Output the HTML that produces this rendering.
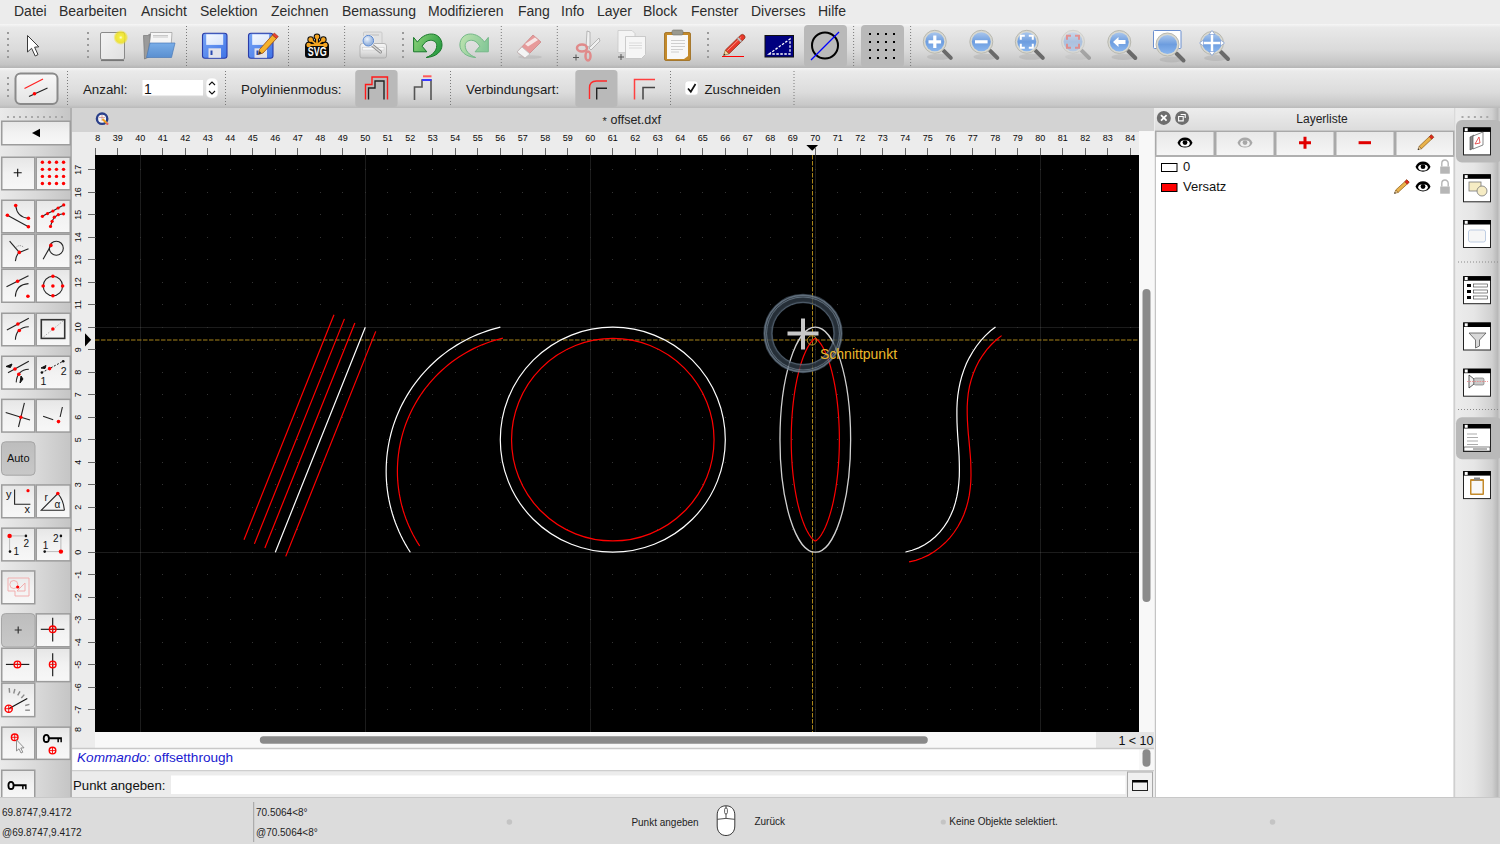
<!DOCTYPE html>
<html><head><meta charset="utf-8">
<style>
*{margin:0;padding:0;box-sizing:border-box}
html,body{width:1500px;height:844px;overflow:hidden;background:#ececec;font-family:"Liberation Sans",sans-serif;color:#1a1a1a}
.a{position:absolute}
#menubar{left:0;top:0;width:1500px;height:24px;background:#ececec}
#menubar span{position:absolute;top:3px;font-size:14px;color:#2c2c2c;white-space:nowrap}
#tb1{left:0;top:24px;width:1500px;height:44px;background:linear-gradient(#f6f6f6 0,#e9e9e9 8%,#dadada 60%,#c4c4c4 92%,#b4b4b4 100%)}
#tb2{left:0;top:68px;width:1500px;height:40px;background:linear-gradient(#f6f6f6 0,#eaeaea 8%,#dcdcdc 60%,#c8c8c8 92%,#bababa 100%)}
.lbl{position:absolute;font-size:14px;color:#1c1c1c;white-space:nowrap}
#leftpanel{left:0;top:108px;width:72px;height:692px;background:linear-gradient(90deg,#eaeaea 0,#dadada 35px,#c6c6c6 69px);border-right:2px solid #b0b0b0}
#mdi{left:72px;top:108px;width:1082px;height:692px;background:#ececec}
#mdititle{left:72px;top:108px;width:1082px;height:24px;background:#d3d3d3}
#rulert{left:95px;top:132px;width:1059px;height:23px;background:#ececec}
#rulerl{left:72px;top:132px;width:23px;height:600px;background:#ececec}
#canvas{left:95px;top:155px;width:1044px;height:577px;background:#000}
#hscroll{left:95px;top:732px;width:1059px;height:16px;background:#f7f7f7}
#vscroll{left:1139px;top:131px;width:15px;height:601px;background:#f7f7f7}
#cmd{left:72px;top:748px;width:1082px;height:52px;background:#ececec}
#layer{left:1155px;top:108px;width:299px;height:692px;background:#ececec}
#rdock{left:1454px;top:108px;width:46px;height:692px;background:linear-gradient(90deg,#d4d4d4 0,#ececec 2px,#e6e6e6 20px,#d0d0d0 38px,#b9b9b9 43.5px,#d0d0d0 46px)}
#status{left:0;top:800px;width:1500px;height:44px;background:#dcdcdc;border-top:1px solid #cfcfcf}
.st{position:absolute;font-size:10px;color:#1f1f1f;white-space:nowrap}
.tbtn{position:absolute;background:linear-gradient(#fbfbfb,#e9e9e9);border:1px solid #a9a9a9}
</style></head><body>
<div id="menubar" class="a">
<span style="left:14px">Datei</span><span style="left:59px">Bearbeiten</span><span style="left:141px">Ansicht</span><span style="left:200px">Selektion</span><span style="left:271px">Zeichnen</span><span style="left:342px">Bemassung</span><span style="left:428px">Modifizieren</span><span style="left:518px">Fang</span><span style="left:561px">Info</span><span style="left:597px">Layer</span><span style="left:643px">Block</span><span style="left:691px">Fenster</span><span style="left:751px">Diverses</span><span style="left:818px">Hilfe</span>
</div>
<div id="tb1" class="a"></div>
<div id="tb2" class="a"></div>
<div id="leftpanel" class="a"></div>
<div id="mdi" class="a"></div>
<div id="mdititle" class="a"></div>
<div id="rulert" class="a"></div>
<div id="rulerl" class="a"></div>
<div id="canvas" class="a"></div>
<div id="hscroll" class="a"></div>
<div id="vscroll" class="a"></div>
<div id="cmd" class="a"></div>
<div id="layer" class="a"></div>
<div id="rdock" class="a"></div>
<div id="status" class="a"></div>
<svg class="a" style="left:95px;top:155px" width="1044" height="577" viewBox="95 155 1044 577">
<rect x="95" y="155" width="1044" height="577" fill="#000"/>
<line x1="140.5" y1="155" x2="140.5" y2="732" stroke="#1c1c1c" stroke-width="1"/>
<line x1="365.5" y1="155" x2="365.5" y2="732" stroke="#1c1c1c" stroke-width="1"/>
<line x1="590.5" y1="155" x2="590.5" y2="732" stroke="#1c1c1c" stroke-width="1"/>
<line x1="815.5" y1="155" x2="815.5" y2="732" stroke="#1c1c1c" stroke-width="1"/>
<line x1="1040.5" y1="155" x2="1040.5" y2="732" stroke="#1c1c1c" stroke-width="1"/>
<line x1="95" y1="327.5" x2="1139" y2="327.5" stroke="#1c1c1c" stroke-width="1"/>
<line x1="95" y1="552.5" x2="1139" y2="552.5" stroke="#1c1c1c" stroke-width="1"/>
<path d="M95 709h1v1h-1zM95 687h1v1h-1zM95 664h1v1h-1zM95 642h1v1h-1zM95 619h1v1h-1zM95 597h1v1h-1zM95 574h1v1h-1zM95 552h1v1h-1zM95 529h1v1h-1zM95 507h1v1h-1zM95 484h1v1h-1zM95 462h1v1h-1zM95 439h1v1h-1zM95 417h1v1h-1zM95 394h1v1h-1zM95 372h1v1h-1zM95 349h1v1h-1zM95 327h1v1h-1zM95 304h1v1h-1zM95 282h1v1h-1zM95 259h1v1h-1zM95 237h1v1h-1zM95 214h1v1h-1zM95 192h1v1h-1zM95 169h1v1h-1zM117 709h1v1h-1zM117 687h1v1h-1zM117 664h1v1h-1zM117 642h1v1h-1zM117 619h1v1h-1zM117 597h1v1h-1zM117 574h1v1h-1zM117 552h1v1h-1zM117 529h1v1h-1zM117 507h1v1h-1zM117 484h1v1h-1zM117 462h1v1h-1zM117 439h1v1h-1zM117 417h1v1h-1zM117 394h1v1h-1zM117 372h1v1h-1zM117 349h1v1h-1zM117 327h1v1h-1zM117 304h1v1h-1zM117 282h1v1h-1zM117 259h1v1h-1zM117 237h1v1h-1zM117 214h1v1h-1zM117 192h1v1h-1zM117 169h1v1h-1zM140 709h1v1h-1zM140 687h1v1h-1zM140 664h1v1h-1zM140 642h1v1h-1zM140 619h1v1h-1zM140 597h1v1h-1zM140 574h1v1h-1zM140 552h1v1h-1zM140 529h1v1h-1zM140 507h1v1h-1zM140 484h1v1h-1zM140 462h1v1h-1zM140 439h1v1h-1zM140 417h1v1h-1zM140 394h1v1h-1zM140 372h1v1h-1zM140 349h1v1h-1zM140 327h1v1h-1zM140 304h1v1h-1zM140 282h1v1h-1zM140 259h1v1h-1zM140 237h1v1h-1zM140 214h1v1h-1zM140 192h1v1h-1zM140 169h1v1h-1zM162 709h1v1h-1zM162 687h1v1h-1zM162 664h1v1h-1zM162 642h1v1h-1zM162 619h1v1h-1zM162 597h1v1h-1zM162 574h1v1h-1zM162 552h1v1h-1zM162 529h1v1h-1zM162 507h1v1h-1zM162 484h1v1h-1zM162 462h1v1h-1zM162 439h1v1h-1zM162 417h1v1h-1zM162 394h1v1h-1zM162 372h1v1h-1zM162 349h1v1h-1zM162 327h1v1h-1zM162 304h1v1h-1zM162 282h1v1h-1zM162 259h1v1h-1zM162 237h1v1h-1zM162 214h1v1h-1zM162 192h1v1h-1zM162 169h1v1h-1zM185 709h1v1h-1zM185 687h1v1h-1zM185 664h1v1h-1zM185 642h1v1h-1zM185 619h1v1h-1zM185 597h1v1h-1zM185 574h1v1h-1zM185 552h1v1h-1zM185 529h1v1h-1zM185 507h1v1h-1zM185 484h1v1h-1zM185 462h1v1h-1zM185 439h1v1h-1zM185 417h1v1h-1zM185 394h1v1h-1zM185 372h1v1h-1zM185 349h1v1h-1zM185 327h1v1h-1zM185 304h1v1h-1zM185 282h1v1h-1zM185 259h1v1h-1zM185 237h1v1h-1zM185 214h1v1h-1zM185 192h1v1h-1zM185 169h1v1h-1zM207 709h1v1h-1zM207 687h1v1h-1zM207 664h1v1h-1zM207 642h1v1h-1zM207 619h1v1h-1zM207 597h1v1h-1zM207 574h1v1h-1zM207 552h1v1h-1zM207 529h1v1h-1zM207 507h1v1h-1zM207 484h1v1h-1zM207 462h1v1h-1zM207 439h1v1h-1zM207 417h1v1h-1zM207 394h1v1h-1zM207 372h1v1h-1zM207 349h1v1h-1zM207 327h1v1h-1zM207 304h1v1h-1zM207 282h1v1h-1zM207 259h1v1h-1zM207 237h1v1h-1zM207 214h1v1h-1zM207 192h1v1h-1zM207 169h1v1h-1zM230 709h1v1h-1zM230 687h1v1h-1zM230 664h1v1h-1zM230 642h1v1h-1zM230 619h1v1h-1zM230 597h1v1h-1zM230 574h1v1h-1zM230 552h1v1h-1zM230 529h1v1h-1zM230 507h1v1h-1zM230 484h1v1h-1zM230 462h1v1h-1zM230 439h1v1h-1zM230 417h1v1h-1zM230 394h1v1h-1zM230 372h1v1h-1zM230 349h1v1h-1zM230 327h1v1h-1zM230 304h1v1h-1zM230 282h1v1h-1zM230 259h1v1h-1zM230 237h1v1h-1zM230 214h1v1h-1zM230 192h1v1h-1zM230 169h1v1h-1zM252 709h1v1h-1zM252 687h1v1h-1zM252 664h1v1h-1zM252 642h1v1h-1zM252 619h1v1h-1zM252 597h1v1h-1zM252 574h1v1h-1zM252 552h1v1h-1zM252 529h1v1h-1zM252 507h1v1h-1zM252 484h1v1h-1zM252 462h1v1h-1zM252 439h1v1h-1zM252 417h1v1h-1zM252 394h1v1h-1zM252 372h1v1h-1zM252 349h1v1h-1zM252 327h1v1h-1zM252 304h1v1h-1zM252 282h1v1h-1zM252 259h1v1h-1zM252 237h1v1h-1zM252 214h1v1h-1zM252 192h1v1h-1zM252 169h1v1h-1zM275 709h1v1h-1zM275 687h1v1h-1zM275 664h1v1h-1zM275 642h1v1h-1zM275 619h1v1h-1zM275 597h1v1h-1zM275 574h1v1h-1zM275 552h1v1h-1zM275 529h1v1h-1zM275 507h1v1h-1zM275 484h1v1h-1zM275 462h1v1h-1zM275 439h1v1h-1zM275 417h1v1h-1zM275 394h1v1h-1zM275 372h1v1h-1zM275 349h1v1h-1zM275 327h1v1h-1zM275 304h1v1h-1zM275 282h1v1h-1zM275 259h1v1h-1zM275 237h1v1h-1zM275 214h1v1h-1zM275 192h1v1h-1zM275 169h1v1h-1zM297 709h1v1h-1zM297 687h1v1h-1zM297 664h1v1h-1zM297 642h1v1h-1zM297 619h1v1h-1zM297 597h1v1h-1zM297 574h1v1h-1zM297 552h1v1h-1zM297 529h1v1h-1zM297 507h1v1h-1zM297 484h1v1h-1zM297 462h1v1h-1zM297 439h1v1h-1zM297 417h1v1h-1zM297 394h1v1h-1zM297 372h1v1h-1zM297 349h1v1h-1zM297 327h1v1h-1zM297 304h1v1h-1zM297 282h1v1h-1zM297 259h1v1h-1zM297 237h1v1h-1zM297 214h1v1h-1zM297 192h1v1h-1zM297 169h1v1h-1zM320 709h1v1h-1zM320 687h1v1h-1zM320 664h1v1h-1zM320 642h1v1h-1zM320 619h1v1h-1zM320 597h1v1h-1zM320 574h1v1h-1zM320 552h1v1h-1zM320 529h1v1h-1zM320 507h1v1h-1zM320 484h1v1h-1zM320 462h1v1h-1zM320 439h1v1h-1zM320 417h1v1h-1zM320 394h1v1h-1zM320 372h1v1h-1zM320 349h1v1h-1zM320 327h1v1h-1zM320 304h1v1h-1zM320 282h1v1h-1zM320 259h1v1h-1zM320 237h1v1h-1zM320 214h1v1h-1zM320 192h1v1h-1zM320 169h1v1h-1zM342 709h1v1h-1zM342 687h1v1h-1zM342 664h1v1h-1zM342 642h1v1h-1zM342 619h1v1h-1zM342 597h1v1h-1zM342 574h1v1h-1zM342 552h1v1h-1zM342 529h1v1h-1zM342 507h1v1h-1zM342 484h1v1h-1zM342 462h1v1h-1zM342 439h1v1h-1zM342 417h1v1h-1zM342 394h1v1h-1zM342 372h1v1h-1zM342 349h1v1h-1zM342 327h1v1h-1zM342 304h1v1h-1zM342 282h1v1h-1zM342 259h1v1h-1zM342 237h1v1h-1zM342 214h1v1h-1zM342 192h1v1h-1zM342 169h1v1h-1zM365 709h1v1h-1zM365 687h1v1h-1zM365 664h1v1h-1zM365 642h1v1h-1zM365 619h1v1h-1zM365 597h1v1h-1zM365 574h1v1h-1zM365 552h1v1h-1zM365 529h1v1h-1zM365 507h1v1h-1zM365 484h1v1h-1zM365 462h1v1h-1zM365 439h1v1h-1zM365 417h1v1h-1zM365 394h1v1h-1zM365 372h1v1h-1zM365 349h1v1h-1zM365 327h1v1h-1zM365 304h1v1h-1zM365 282h1v1h-1zM365 259h1v1h-1zM365 237h1v1h-1zM365 214h1v1h-1zM365 192h1v1h-1zM365 169h1v1h-1zM387 709h1v1h-1zM387 687h1v1h-1zM387 664h1v1h-1zM387 642h1v1h-1zM387 619h1v1h-1zM387 597h1v1h-1zM387 574h1v1h-1zM387 552h1v1h-1zM387 529h1v1h-1zM387 507h1v1h-1zM387 484h1v1h-1zM387 462h1v1h-1zM387 439h1v1h-1zM387 417h1v1h-1zM387 394h1v1h-1zM387 372h1v1h-1zM387 349h1v1h-1zM387 327h1v1h-1zM387 304h1v1h-1zM387 282h1v1h-1zM387 259h1v1h-1zM387 237h1v1h-1zM387 214h1v1h-1zM387 192h1v1h-1zM387 169h1v1h-1zM410 709h1v1h-1zM410 687h1v1h-1zM410 664h1v1h-1zM410 642h1v1h-1zM410 619h1v1h-1zM410 597h1v1h-1zM410 574h1v1h-1zM410 552h1v1h-1zM410 529h1v1h-1zM410 507h1v1h-1zM410 484h1v1h-1zM410 462h1v1h-1zM410 439h1v1h-1zM410 417h1v1h-1zM410 394h1v1h-1zM410 372h1v1h-1zM410 349h1v1h-1zM410 327h1v1h-1zM410 304h1v1h-1zM410 282h1v1h-1zM410 259h1v1h-1zM410 237h1v1h-1zM410 214h1v1h-1zM410 192h1v1h-1zM410 169h1v1h-1zM432 709h1v1h-1zM432 687h1v1h-1zM432 664h1v1h-1zM432 642h1v1h-1zM432 619h1v1h-1zM432 597h1v1h-1zM432 574h1v1h-1zM432 552h1v1h-1zM432 529h1v1h-1zM432 507h1v1h-1zM432 484h1v1h-1zM432 462h1v1h-1zM432 439h1v1h-1zM432 417h1v1h-1zM432 394h1v1h-1zM432 372h1v1h-1zM432 349h1v1h-1zM432 327h1v1h-1zM432 304h1v1h-1zM432 282h1v1h-1zM432 259h1v1h-1zM432 237h1v1h-1zM432 214h1v1h-1zM432 192h1v1h-1zM432 169h1v1h-1zM455 709h1v1h-1zM455 687h1v1h-1zM455 664h1v1h-1zM455 642h1v1h-1zM455 619h1v1h-1zM455 597h1v1h-1zM455 574h1v1h-1zM455 552h1v1h-1zM455 529h1v1h-1zM455 507h1v1h-1zM455 484h1v1h-1zM455 462h1v1h-1zM455 439h1v1h-1zM455 417h1v1h-1zM455 394h1v1h-1zM455 372h1v1h-1zM455 349h1v1h-1zM455 327h1v1h-1zM455 304h1v1h-1zM455 282h1v1h-1zM455 259h1v1h-1zM455 237h1v1h-1zM455 214h1v1h-1zM455 192h1v1h-1zM455 169h1v1h-1zM477 709h1v1h-1zM477 687h1v1h-1zM477 664h1v1h-1zM477 642h1v1h-1zM477 619h1v1h-1zM477 597h1v1h-1zM477 574h1v1h-1zM477 552h1v1h-1zM477 529h1v1h-1zM477 507h1v1h-1zM477 484h1v1h-1zM477 462h1v1h-1zM477 439h1v1h-1zM477 417h1v1h-1zM477 394h1v1h-1zM477 372h1v1h-1zM477 349h1v1h-1zM477 327h1v1h-1zM477 304h1v1h-1zM477 282h1v1h-1zM477 259h1v1h-1zM477 237h1v1h-1zM477 214h1v1h-1zM477 192h1v1h-1zM477 169h1v1h-1zM500 709h1v1h-1zM500 687h1v1h-1zM500 664h1v1h-1zM500 642h1v1h-1zM500 619h1v1h-1zM500 597h1v1h-1zM500 574h1v1h-1zM500 552h1v1h-1zM500 529h1v1h-1zM500 507h1v1h-1zM500 484h1v1h-1zM500 462h1v1h-1zM500 439h1v1h-1zM500 417h1v1h-1zM500 394h1v1h-1zM500 372h1v1h-1zM500 349h1v1h-1zM500 327h1v1h-1zM500 304h1v1h-1zM500 282h1v1h-1zM500 259h1v1h-1zM500 237h1v1h-1zM500 214h1v1h-1zM500 192h1v1h-1zM500 169h1v1h-1zM522 709h1v1h-1zM522 687h1v1h-1zM522 664h1v1h-1zM522 642h1v1h-1zM522 619h1v1h-1zM522 597h1v1h-1zM522 574h1v1h-1zM522 552h1v1h-1zM522 529h1v1h-1zM522 507h1v1h-1zM522 484h1v1h-1zM522 462h1v1h-1zM522 439h1v1h-1zM522 417h1v1h-1zM522 394h1v1h-1zM522 372h1v1h-1zM522 349h1v1h-1zM522 327h1v1h-1zM522 304h1v1h-1zM522 282h1v1h-1zM522 259h1v1h-1zM522 237h1v1h-1zM522 214h1v1h-1zM522 192h1v1h-1zM522 169h1v1h-1zM545 709h1v1h-1zM545 687h1v1h-1zM545 664h1v1h-1zM545 642h1v1h-1zM545 619h1v1h-1zM545 597h1v1h-1zM545 574h1v1h-1zM545 552h1v1h-1zM545 529h1v1h-1zM545 507h1v1h-1zM545 484h1v1h-1zM545 462h1v1h-1zM545 439h1v1h-1zM545 417h1v1h-1zM545 394h1v1h-1zM545 372h1v1h-1zM545 349h1v1h-1zM545 327h1v1h-1zM545 304h1v1h-1zM545 282h1v1h-1zM545 259h1v1h-1zM545 237h1v1h-1zM545 214h1v1h-1zM545 192h1v1h-1zM545 169h1v1h-1zM567 709h1v1h-1zM567 687h1v1h-1zM567 664h1v1h-1zM567 642h1v1h-1zM567 619h1v1h-1zM567 597h1v1h-1zM567 574h1v1h-1zM567 552h1v1h-1zM567 529h1v1h-1zM567 507h1v1h-1zM567 484h1v1h-1zM567 462h1v1h-1zM567 439h1v1h-1zM567 417h1v1h-1zM567 394h1v1h-1zM567 372h1v1h-1zM567 349h1v1h-1zM567 327h1v1h-1zM567 304h1v1h-1zM567 282h1v1h-1zM567 259h1v1h-1zM567 237h1v1h-1zM567 214h1v1h-1zM567 192h1v1h-1zM567 169h1v1h-1zM590 709h1v1h-1zM590 687h1v1h-1zM590 664h1v1h-1zM590 642h1v1h-1zM590 619h1v1h-1zM590 597h1v1h-1zM590 574h1v1h-1zM590 552h1v1h-1zM590 529h1v1h-1zM590 507h1v1h-1zM590 484h1v1h-1zM590 462h1v1h-1zM590 439h1v1h-1zM590 417h1v1h-1zM590 394h1v1h-1zM590 372h1v1h-1zM590 349h1v1h-1zM590 327h1v1h-1zM590 304h1v1h-1zM590 282h1v1h-1zM590 259h1v1h-1zM590 237h1v1h-1zM590 214h1v1h-1zM590 192h1v1h-1zM590 169h1v1h-1zM612 709h1v1h-1zM612 687h1v1h-1zM612 664h1v1h-1zM612 642h1v1h-1zM612 619h1v1h-1zM612 597h1v1h-1zM612 574h1v1h-1zM612 552h1v1h-1zM612 529h1v1h-1zM612 507h1v1h-1zM612 484h1v1h-1zM612 462h1v1h-1zM612 439h1v1h-1zM612 417h1v1h-1zM612 394h1v1h-1zM612 372h1v1h-1zM612 349h1v1h-1zM612 327h1v1h-1zM612 304h1v1h-1zM612 282h1v1h-1zM612 259h1v1h-1zM612 237h1v1h-1zM612 214h1v1h-1zM612 192h1v1h-1zM612 169h1v1h-1zM635 709h1v1h-1zM635 687h1v1h-1zM635 664h1v1h-1zM635 642h1v1h-1zM635 619h1v1h-1zM635 597h1v1h-1zM635 574h1v1h-1zM635 552h1v1h-1zM635 529h1v1h-1zM635 507h1v1h-1zM635 484h1v1h-1zM635 462h1v1h-1zM635 439h1v1h-1zM635 417h1v1h-1zM635 394h1v1h-1zM635 372h1v1h-1zM635 349h1v1h-1zM635 327h1v1h-1zM635 304h1v1h-1zM635 282h1v1h-1zM635 259h1v1h-1zM635 237h1v1h-1zM635 214h1v1h-1zM635 192h1v1h-1zM635 169h1v1h-1zM657 709h1v1h-1zM657 687h1v1h-1zM657 664h1v1h-1zM657 642h1v1h-1zM657 619h1v1h-1zM657 597h1v1h-1zM657 574h1v1h-1zM657 552h1v1h-1zM657 529h1v1h-1zM657 507h1v1h-1zM657 484h1v1h-1zM657 462h1v1h-1zM657 439h1v1h-1zM657 417h1v1h-1zM657 394h1v1h-1zM657 372h1v1h-1zM657 349h1v1h-1zM657 327h1v1h-1zM657 304h1v1h-1zM657 282h1v1h-1zM657 259h1v1h-1zM657 237h1v1h-1zM657 214h1v1h-1zM657 192h1v1h-1zM657 169h1v1h-1zM680 709h1v1h-1zM680 687h1v1h-1zM680 664h1v1h-1zM680 642h1v1h-1zM680 619h1v1h-1zM680 597h1v1h-1zM680 574h1v1h-1zM680 552h1v1h-1zM680 529h1v1h-1zM680 507h1v1h-1zM680 484h1v1h-1zM680 462h1v1h-1zM680 439h1v1h-1zM680 417h1v1h-1zM680 394h1v1h-1zM680 372h1v1h-1zM680 349h1v1h-1zM680 327h1v1h-1zM680 304h1v1h-1zM680 282h1v1h-1zM680 259h1v1h-1zM680 237h1v1h-1zM680 214h1v1h-1zM680 192h1v1h-1zM680 169h1v1h-1zM702 709h1v1h-1zM702 687h1v1h-1zM702 664h1v1h-1zM702 642h1v1h-1zM702 619h1v1h-1zM702 597h1v1h-1zM702 574h1v1h-1zM702 552h1v1h-1zM702 529h1v1h-1zM702 507h1v1h-1zM702 484h1v1h-1zM702 462h1v1h-1zM702 439h1v1h-1zM702 417h1v1h-1zM702 394h1v1h-1zM702 372h1v1h-1zM702 349h1v1h-1zM702 327h1v1h-1zM702 304h1v1h-1zM702 282h1v1h-1zM702 259h1v1h-1zM702 237h1v1h-1zM702 214h1v1h-1zM702 192h1v1h-1zM702 169h1v1h-1zM725 709h1v1h-1zM725 687h1v1h-1zM725 664h1v1h-1zM725 642h1v1h-1zM725 619h1v1h-1zM725 597h1v1h-1zM725 574h1v1h-1zM725 552h1v1h-1zM725 529h1v1h-1zM725 507h1v1h-1zM725 484h1v1h-1zM725 462h1v1h-1zM725 439h1v1h-1zM725 417h1v1h-1zM725 394h1v1h-1zM725 372h1v1h-1zM725 349h1v1h-1zM725 327h1v1h-1zM725 304h1v1h-1zM725 282h1v1h-1zM725 259h1v1h-1zM725 237h1v1h-1zM725 214h1v1h-1zM725 192h1v1h-1zM725 169h1v1h-1zM747 709h1v1h-1zM747 687h1v1h-1zM747 664h1v1h-1zM747 642h1v1h-1zM747 619h1v1h-1zM747 597h1v1h-1zM747 574h1v1h-1zM747 552h1v1h-1zM747 529h1v1h-1zM747 507h1v1h-1zM747 484h1v1h-1zM747 462h1v1h-1zM747 439h1v1h-1zM747 417h1v1h-1zM747 394h1v1h-1zM747 372h1v1h-1zM747 349h1v1h-1zM747 327h1v1h-1zM747 304h1v1h-1zM747 282h1v1h-1zM747 259h1v1h-1zM747 237h1v1h-1zM747 214h1v1h-1zM747 192h1v1h-1zM747 169h1v1h-1zM770 709h1v1h-1zM770 687h1v1h-1zM770 664h1v1h-1zM770 642h1v1h-1zM770 619h1v1h-1zM770 597h1v1h-1zM770 574h1v1h-1zM770 552h1v1h-1zM770 529h1v1h-1zM770 507h1v1h-1zM770 484h1v1h-1zM770 462h1v1h-1zM770 439h1v1h-1zM770 417h1v1h-1zM770 394h1v1h-1zM770 372h1v1h-1zM770 349h1v1h-1zM770 327h1v1h-1zM770 304h1v1h-1zM770 282h1v1h-1zM770 259h1v1h-1zM770 237h1v1h-1zM770 214h1v1h-1zM770 192h1v1h-1zM770 169h1v1h-1zM792 709h1v1h-1zM792 687h1v1h-1zM792 664h1v1h-1zM792 642h1v1h-1zM792 619h1v1h-1zM792 597h1v1h-1zM792 574h1v1h-1zM792 552h1v1h-1zM792 529h1v1h-1zM792 507h1v1h-1zM792 484h1v1h-1zM792 462h1v1h-1zM792 439h1v1h-1zM792 417h1v1h-1zM792 394h1v1h-1zM792 372h1v1h-1zM792 349h1v1h-1zM792 327h1v1h-1zM792 304h1v1h-1zM792 282h1v1h-1zM792 259h1v1h-1zM792 237h1v1h-1zM792 214h1v1h-1zM792 192h1v1h-1zM792 169h1v1h-1zM815 709h1v1h-1zM815 687h1v1h-1zM815 664h1v1h-1zM815 642h1v1h-1zM815 619h1v1h-1zM815 597h1v1h-1zM815 574h1v1h-1zM815 552h1v1h-1zM815 529h1v1h-1zM815 507h1v1h-1zM815 484h1v1h-1zM815 462h1v1h-1zM815 439h1v1h-1zM815 417h1v1h-1zM815 394h1v1h-1zM815 372h1v1h-1zM815 349h1v1h-1zM815 327h1v1h-1zM815 304h1v1h-1zM815 282h1v1h-1zM815 259h1v1h-1zM815 237h1v1h-1zM815 214h1v1h-1zM815 192h1v1h-1zM815 169h1v1h-1zM837 709h1v1h-1zM837 687h1v1h-1zM837 664h1v1h-1zM837 642h1v1h-1zM837 619h1v1h-1zM837 597h1v1h-1zM837 574h1v1h-1zM837 552h1v1h-1zM837 529h1v1h-1zM837 507h1v1h-1zM837 484h1v1h-1zM837 462h1v1h-1zM837 439h1v1h-1zM837 417h1v1h-1zM837 394h1v1h-1zM837 372h1v1h-1zM837 349h1v1h-1zM837 327h1v1h-1zM837 304h1v1h-1zM837 282h1v1h-1zM837 259h1v1h-1zM837 237h1v1h-1zM837 214h1v1h-1zM837 192h1v1h-1zM837 169h1v1h-1zM860 709h1v1h-1zM860 687h1v1h-1zM860 664h1v1h-1zM860 642h1v1h-1zM860 619h1v1h-1zM860 597h1v1h-1zM860 574h1v1h-1zM860 552h1v1h-1zM860 529h1v1h-1zM860 507h1v1h-1zM860 484h1v1h-1zM860 462h1v1h-1zM860 439h1v1h-1zM860 417h1v1h-1zM860 394h1v1h-1zM860 372h1v1h-1zM860 349h1v1h-1zM860 327h1v1h-1zM860 304h1v1h-1zM860 282h1v1h-1zM860 259h1v1h-1zM860 237h1v1h-1zM860 214h1v1h-1zM860 192h1v1h-1zM860 169h1v1h-1zM882 709h1v1h-1zM882 687h1v1h-1zM882 664h1v1h-1zM882 642h1v1h-1zM882 619h1v1h-1zM882 597h1v1h-1zM882 574h1v1h-1zM882 552h1v1h-1zM882 529h1v1h-1zM882 507h1v1h-1zM882 484h1v1h-1zM882 462h1v1h-1zM882 439h1v1h-1zM882 417h1v1h-1zM882 394h1v1h-1zM882 372h1v1h-1zM882 349h1v1h-1zM882 327h1v1h-1zM882 304h1v1h-1zM882 282h1v1h-1zM882 259h1v1h-1zM882 237h1v1h-1zM882 214h1v1h-1zM882 192h1v1h-1zM882 169h1v1h-1zM905 709h1v1h-1zM905 687h1v1h-1zM905 664h1v1h-1zM905 642h1v1h-1zM905 619h1v1h-1zM905 597h1v1h-1zM905 574h1v1h-1zM905 552h1v1h-1zM905 529h1v1h-1zM905 507h1v1h-1zM905 484h1v1h-1zM905 462h1v1h-1zM905 439h1v1h-1zM905 417h1v1h-1zM905 394h1v1h-1zM905 372h1v1h-1zM905 349h1v1h-1zM905 327h1v1h-1zM905 304h1v1h-1zM905 282h1v1h-1zM905 259h1v1h-1zM905 237h1v1h-1zM905 214h1v1h-1zM905 192h1v1h-1zM905 169h1v1h-1zM927 709h1v1h-1zM927 687h1v1h-1zM927 664h1v1h-1zM927 642h1v1h-1zM927 619h1v1h-1zM927 597h1v1h-1zM927 574h1v1h-1zM927 552h1v1h-1zM927 529h1v1h-1zM927 507h1v1h-1zM927 484h1v1h-1zM927 462h1v1h-1zM927 439h1v1h-1zM927 417h1v1h-1zM927 394h1v1h-1zM927 372h1v1h-1zM927 349h1v1h-1zM927 327h1v1h-1zM927 304h1v1h-1zM927 282h1v1h-1zM927 259h1v1h-1zM927 237h1v1h-1zM927 214h1v1h-1zM927 192h1v1h-1zM927 169h1v1h-1zM950 709h1v1h-1zM950 687h1v1h-1zM950 664h1v1h-1zM950 642h1v1h-1zM950 619h1v1h-1zM950 597h1v1h-1zM950 574h1v1h-1zM950 552h1v1h-1zM950 529h1v1h-1zM950 507h1v1h-1zM950 484h1v1h-1zM950 462h1v1h-1zM950 439h1v1h-1zM950 417h1v1h-1zM950 394h1v1h-1zM950 372h1v1h-1zM950 349h1v1h-1zM950 327h1v1h-1zM950 304h1v1h-1zM950 282h1v1h-1zM950 259h1v1h-1zM950 237h1v1h-1zM950 214h1v1h-1zM950 192h1v1h-1zM950 169h1v1h-1zM972 709h1v1h-1zM972 687h1v1h-1zM972 664h1v1h-1zM972 642h1v1h-1zM972 619h1v1h-1zM972 597h1v1h-1zM972 574h1v1h-1zM972 552h1v1h-1zM972 529h1v1h-1zM972 507h1v1h-1zM972 484h1v1h-1zM972 462h1v1h-1zM972 439h1v1h-1zM972 417h1v1h-1zM972 394h1v1h-1zM972 372h1v1h-1zM972 349h1v1h-1zM972 327h1v1h-1zM972 304h1v1h-1zM972 282h1v1h-1zM972 259h1v1h-1zM972 237h1v1h-1zM972 214h1v1h-1zM972 192h1v1h-1zM972 169h1v1h-1zM995 709h1v1h-1zM995 687h1v1h-1zM995 664h1v1h-1zM995 642h1v1h-1zM995 619h1v1h-1zM995 597h1v1h-1zM995 574h1v1h-1zM995 552h1v1h-1zM995 529h1v1h-1zM995 507h1v1h-1zM995 484h1v1h-1zM995 462h1v1h-1zM995 439h1v1h-1zM995 417h1v1h-1zM995 394h1v1h-1zM995 372h1v1h-1zM995 349h1v1h-1zM995 327h1v1h-1zM995 304h1v1h-1zM995 282h1v1h-1zM995 259h1v1h-1zM995 237h1v1h-1zM995 214h1v1h-1zM995 192h1v1h-1zM995 169h1v1h-1zM1017 709h1v1h-1zM1017 687h1v1h-1zM1017 664h1v1h-1zM1017 642h1v1h-1zM1017 619h1v1h-1zM1017 597h1v1h-1zM1017 574h1v1h-1zM1017 552h1v1h-1zM1017 529h1v1h-1zM1017 507h1v1h-1zM1017 484h1v1h-1zM1017 462h1v1h-1zM1017 439h1v1h-1zM1017 417h1v1h-1zM1017 394h1v1h-1zM1017 372h1v1h-1zM1017 349h1v1h-1zM1017 327h1v1h-1zM1017 304h1v1h-1zM1017 282h1v1h-1zM1017 259h1v1h-1zM1017 237h1v1h-1zM1017 214h1v1h-1zM1017 192h1v1h-1zM1017 169h1v1h-1zM1040 709h1v1h-1zM1040 687h1v1h-1zM1040 664h1v1h-1zM1040 642h1v1h-1zM1040 619h1v1h-1zM1040 597h1v1h-1zM1040 574h1v1h-1zM1040 552h1v1h-1zM1040 529h1v1h-1zM1040 507h1v1h-1zM1040 484h1v1h-1zM1040 462h1v1h-1zM1040 439h1v1h-1zM1040 417h1v1h-1zM1040 394h1v1h-1zM1040 372h1v1h-1zM1040 349h1v1h-1zM1040 327h1v1h-1zM1040 304h1v1h-1zM1040 282h1v1h-1zM1040 259h1v1h-1zM1040 237h1v1h-1zM1040 214h1v1h-1zM1040 192h1v1h-1zM1040 169h1v1h-1zM1062 709h1v1h-1zM1062 687h1v1h-1zM1062 664h1v1h-1zM1062 642h1v1h-1zM1062 619h1v1h-1zM1062 597h1v1h-1zM1062 574h1v1h-1zM1062 552h1v1h-1zM1062 529h1v1h-1zM1062 507h1v1h-1zM1062 484h1v1h-1zM1062 462h1v1h-1zM1062 439h1v1h-1zM1062 417h1v1h-1zM1062 394h1v1h-1zM1062 372h1v1h-1zM1062 349h1v1h-1zM1062 327h1v1h-1zM1062 304h1v1h-1zM1062 282h1v1h-1zM1062 259h1v1h-1zM1062 237h1v1h-1zM1062 214h1v1h-1zM1062 192h1v1h-1zM1062 169h1v1h-1zM1085 709h1v1h-1zM1085 687h1v1h-1zM1085 664h1v1h-1zM1085 642h1v1h-1zM1085 619h1v1h-1zM1085 597h1v1h-1zM1085 574h1v1h-1zM1085 552h1v1h-1zM1085 529h1v1h-1zM1085 507h1v1h-1zM1085 484h1v1h-1zM1085 462h1v1h-1zM1085 439h1v1h-1zM1085 417h1v1h-1zM1085 394h1v1h-1zM1085 372h1v1h-1zM1085 349h1v1h-1zM1085 327h1v1h-1zM1085 304h1v1h-1zM1085 282h1v1h-1zM1085 259h1v1h-1zM1085 237h1v1h-1zM1085 214h1v1h-1zM1085 192h1v1h-1zM1085 169h1v1h-1zM1107 709h1v1h-1zM1107 687h1v1h-1zM1107 664h1v1h-1zM1107 642h1v1h-1zM1107 619h1v1h-1zM1107 597h1v1h-1zM1107 574h1v1h-1zM1107 552h1v1h-1zM1107 529h1v1h-1zM1107 507h1v1h-1zM1107 484h1v1h-1zM1107 462h1v1h-1zM1107 439h1v1h-1zM1107 417h1v1h-1zM1107 394h1v1h-1zM1107 372h1v1h-1zM1107 349h1v1h-1zM1107 327h1v1h-1zM1107 304h1v1h-1zM1107 282h1v1h-1zM1107 259h1v1h-1zM1107 237h1v1h-1zM1107 214h1v1h-1zM1107 192h1v1h-1zM1107 169h1v1h-1zM1130 709h1v1h-1zM1130 687h1v1h-1zM1130 664h1v1h-1zM1130 642h1v1h-1zM1130 619h1v1h-1zM1130 597h1v1h-1zM1130 574h1v1h-1zM1130 552h1v1h-1zM1130 529h1v1h-1zM1130 507h1v1h-1zM1130 484h1v1h-1zM1130 462h1v1h-1zM1130 439h1v1h-1zM1130 417h1v1h-1zM1130 394h1v1h-1zM1130 372h1v1h-1zM1130 349h1v1h-1zM1130 327h1v1h-1zM1130 304h1v1h-1zM1130 282h1v1h-1zM1130 259h1v1h-1zM1130 237h1v1h-1zM1130 214h1v1h-1zM1130 192h1v1h-1zM1130 169h1v1h-1z" fill="#333333"/>
<line x1="95" y1="340" x2="1139" y2="340" stroke="#a8841a" stroke-width="1" stroke-dasharray="4.5 1.5"/>
<line x1="812.5" y1="155" x2="812.5" y2="732" stroke="#a8841a" stroke-width="1" stroke-dasharray="4.5 1.5"/>
<line x1="243.98" y1="539.69" x2="333.98" y2="314.69" stroke="#f00" stroke-width="1.2"/>
<line x1="254.42" y1="543.86" x2="344.42" y2="318.86" stroke="#f00" stroke-width="1.2"/>
<line x1="264.86" y1="548.03" x2="354.86" y2="323.03" stroke="#f00" stroke-width="1.2"/>
<line x1="275.3" y1="552.2" x2="365.3" y2="327.2" stroke="#fff" stroke-width="1.2"/>
<line x1="285.74" y1="556.37" x2="375.74" y2="331.37" stroke="#f00" stroke-width="1.2"/>
<path d="M500.3 327.2 L495.71 328.35 L491.16 329.65 L486.65 331.1 L482.19 332.69 L477.79 334.42 L473.44 336.29 L469.15 338.3 L464.93 340.44 L460.79 342.72 L456.71 345.13 L452.72 347.67 L448.81 350.33 L444.98 353.12 L441.25 356.03 L437.61 359.06 L434.08 362.2 L430.64 365.46 L427.31 368.82 L424.09 372.29 L420.98 375.86 L417.99 379.53 L415.11 383.29 L412.36 387.14 L409.73 391.07 L407.23 395.09 L404.86 399.19 L402.62 403.36 L400.52 407.6 L398.55 411.9 L396.73 416.27 L395.04 420.69 L393.49 425.17 L392.09 429.69 L390.84 434.25 L389.73 438.85 L388.77 443.49 L387.96 448.15 L387.29 452.84 L386.78 457.54 L386.42 462.26 L386.21 466.99 L386.15 471.72 L386.24 476.45 L386.48 481.18 L386.88 485.9 L387.43 490.6 L388.12 495.28 L388.97 499.94 L389.96 504.56 L391.1 509.16 L392.39 513.71 L393.82 518.22 L395.4 522.69 L397.12 527.1 L398.98 531.45 L400.97 535.74 L403.11 539.96 L405.37 544.12 L407.77 548.2 L410.3 552.2" fill="none" stroke="#fff" stroke-width="1.2"/>
<path d="M502.87 338.15 L498.63 339.22 L494.42 340.42 L490.26 341.76 L486.14 343.22 L482.07 344.82 L478.05 346.55 L474.09 348.4 L470.19 350.39 L466.36 352.49 L462.6 354.72 L458.9 357.06 L455.29 359.53 L451.76 362.1 L448.31 364.79 L444.95 367.59 L441.68 370.49 L438.5 373.5 L435.43 376.61 L432.45 379.81 L429.58 383.11 L426.81 386.5 L424.16 389.97 L421.62 393.53 L419.19 397.17 L416.88 400.88 L414.69 404.67 L412.62 408.52 L410.68 412.44 L408.86 416.41 L407.17 420.45 L405.61 424.53 L404.19 428.67 L402.89 432.84 L401.73 437.06 L400.71 441.31 L399.82 445.59 L399.07 449.9 L398.46 454.23 L397.98 458.58 L397.65 462.94 L397.45 467.31 L397.4 471.68 L397.48 476.05 L397.71 480.42 L398.07 484.78 L398.58 489.12 L399.22 493.45 L400 497.75 L400.92 502.03 L401.97 506.27 L403.16 510.48 L404.49 514.65 L405.94 518.77 L407.53 522.84 L409.25 526.87 L411.09 530.83 L413.07 534.73 L415.16 538.57 L417.38 542.34 L419.71 546.04" fill="none" stroke="#f00" stroke-width="1.2"/>
<circle cx="612.8" cy="439.7" r="112.5" fill="none" stroke="#fff" stroke-width="1.2"/>
<circle cx="612.8" cy="439.7" r="101.25" fill="none" stroke="#f00" stroke-width="1.2"/>
<ellipse cx="815.3" cy="439.7" rx="35.33" ry="112.5" fill="none" stroke="#d0d0d0" stroke-width="1.3"/>
<path d="M839.37 439.7 L839.36 436.85 L839.33 434 L839.27 431.15 L839.19 428.31 L839.08 425.48 L838.95 422.66 L838.8 419.85 L838.63 417.06 L838.43 414.28 L838.21 411.53 L837.97 408.79 L837.7 406.08 L837.42 403.39 L837.11 400.73 L836.78 398.1 L836.43 395.5 L836.06 392.93 L835.67 390.4 L835.25 387.91 L834.82 385.46 L834.37 383.04 L833.9 380.68 L833.42 378.35 L832.91 376.08 L832.39 373.85 L831.85 371.67 L831.3 369.55 L830.73 367.48 L830.14 365.47 L829.55 363.52 L828.94 361.63 L828.31 359.8 L827.68 358.04 L827.04 356.34 L826.39 354.71 L825.74 353.15 L825.08 351.66 L824.41 350.25 L823.75 348.91 L823.08 347.65 L822.42 346.47 L821.76 345.36 L821.11 344.35 L820.47 343.41 L819.85 342.56 L819.25 341.8 L818.67 341.12 L818.13 340.52 L817.61 340.02 L817.14 339.59 L816.71 339.25 L816.34 338.97 L816.02 338.77 L815.76 338.63 L815.56 338.54 L815.42 338.48 L815.34 338.46 L815.3 338.45 L815.29 338.45 L815.3 338.45 L815.31 338.45 L815.3 338.45 L815.26 338.46 L815.18 338.48 L815.04 338.54 L814.84 338.63 L814.58 338.77 L814.26 338.97 L813.89 339.25 L813.46 339.59 L812.99 340.02 L812.47 340.52 L811.93 341.12 L811.35 341.8 L810.75 342.56 L810.13 343.41 L809.49 344.35 L808.84 345.36 L808.18 346.47 L807.52 347.65 L806.85 348.91 L806.19 350.25 L805.52 351.66 L804.86 353.15 L804.21 354.71 L803.56 356.34 L802.92 358.04 L802.29 359.8 L801.66 361.63 L801.05 363.52 L800.46 365.47 L799.87 367.48 L799.3 369.55 L798.75 371.67 L798.21 373.85 L797.69 376.08 L797.18 378.35 L796.7 380.68 L796.23 383.04 L795.78 385.46 L795.35 387.91 L794.93 390.4 L794.54 392.93 L794.17 395.5 L793.82 398.1 L793.49 400.73 L793.18 403.39 L792.9 406.08 L792.63 408.79 L792.39 411.53 L792.17 414.28 L791.97 417.06 L791.8 419.85 L791.65 422.66 L791.52 425.48 L791.41 428.31 L791.33 431.15 L791.27 434 L791.24 436.85 L791.23 439.7 L791.24 442.55 L791.27 445.4 L791.33 448.25 L791.41 451.09 L791.52 453.92 L791.65 456.74 L791.8 459.55 L791.97 462.34 L792.17 465.12 L792.39 467.87 L792.63 470.61 L792.9 473.32 L793.18 476.01 L793.49 478.67 L793.82 481.3 L794.17 483.9 L794.54 486.47 L794.93 489 L795.35 491.49 L795.78 493.94 L796.23 496.36 L796.7 498.72 L797.18 501.05 L797.69 503.32 L798.21 505.55 L798.75 507.73 L799.3 509.85 L799.87 511.92 L800.46 513.93 L801.05 515.88 L801.66 517.77 L802.29 519.6 L802.92 521.36 L803.56 523.06 L804.21 524.69 L804.86 526.25 L805.52 527.74 L806.19 529.15 L806.85 530.49 L807.52 531.75 L808.18 532.93 L808.84 534.04 L809.49 535.05 L810.13 535.99 L810.75 536.84 L811.35 537.6 L811.93 538.28 L812.47 538.88 L812.99 539.38 L813.46 539.81 L813.89 540.15 L814.26 540.43 L814.58 540.63 L814.84 540.77 L815.04 540.86 L815.18 540.92 L815.26 540.94 L815.3 540.95 L815.31 540.95 L815.3 540.95 L815.29 540.95 L815.3 540.95 L815.34 540.94 L815.42 540.92 L815.56 540.86 L815.76 540.77 L816.02 540.63 L816.34 540.43 L816.71 540.15 L817.14 539.81 L817.61 539.38 L818.13 538.88 L818.67 538.28 L819.25 537.6 L819.85 536.84 L820.47 535.99 L821.11 535.05 L821.76 534.04 L822.42 532.93 L823.08 531.75 L823.75 530.49 L824.41 529.15 L825.08 527.74 L825.74 526.25 L826.39 524.69 L827.04 523.06 L827.68 521.36 L828.31 519.6 L828.94 517.77 L829.55 515.88 L830.14 513.93 L830.73 511.92 L831.3 509.85 L831.85 507.73 L832.39 505.55 L832.91 503.32 L833.42 501.05 L833.9 498.72 L834.37 496.36 L834.82 493.94 L835.25 491.49 L835.67 489 L836.06 486.47 L836.43 483.9 L836.78 481.3 L837.11 478.67 L837.42 476.01 L837.7 473.32 L837.97 470.61 L838.21 467.87 L838.43 465.12 L838.63 462.34 L838.8 459.55 L838.95 456.74 L839.08 453.92 L839.19 451.09 L839.27 448.25 L839.33 445.4 L839.36 442.55 L839.37 439.7 Z" fill="none" stroke="#f00" stroke-width="1.2"/>
<path d="M995.5 327.0 L990.3 331.0 L985.4 335.6 L980.8 340.6 L976.6 346.0 L972.8 351.7 L969.4 357.6 L966.4 363.6 L963.9 369.9 L961.8 376.2 L960.1 382.6 L958.8 389.1 L957.8 395.6 L957.2 402.2 L956.9 408.8 L956.9 415.5 L957.0 422.2 L957.3 428.9 L957.7 435.6 L958.2 442.4 L958.7 449.2 L959.1 456.0 L959.3 462.8 L959.4 469.6 L959.3 476.4 L958.8 483.2 L958.1 489.9 L956.9 496.4 L955.3 502.9 L953.3 509.2 L950.7 515.3 L947.7 521.2 L944.1 526.7 L940.0 531.9 L935.3 536.7 L930.2 541.0 L924.6 544.8 L918.6 547.9 L912.2 550.3 L905.5 552.0" fill="none" stroke="#fff" stroke-width="1.2"/>
<path d="M1001.6 335.6 L996.3 339.8 L991.4 344.5 L986.8 349.7 L982.7 355.3 L979.0 361.1 L975.9 367.2 L973.3 373.5 L971.2 379.9 L969.5 386.4 L968.3 393.0 L967.6 399.7 L967.2 406.5 L967.2 413.2 L967.4 420.0 L967.8 426.8 L968.3 433.7 L969.0 440.6 L969.6 447.4 L970.2 454.3 L970.7 461.2 L970.9 468.1 L971.0 474.9 L970.8 481.7 L970.2 488.5 L969.3 495.2 L967.9 501.8 L966.1 508.3 L963.8 514.7 L961.0 520.9 L957.8 526.8 L954.0 532.5 L949.8 537.8 L945.1 542.8 L939.9 547.4 L934.4 551.5 L928.5 555.1 L922.2 558.0 L915.8 560.3 L909.1 561.8" fill="none" stroke="#f00" stroke-width="1.2"/>
<g fill="none">
<circle cx="803" cy="333.5" r="35" stroke="#4a5a6a" stroke-width="9.5" opacity="0.62"/>
<circle cx="803" cy="333.5" r="34" stroke="#1c242c" stroke-width="3" opacity="0.5"/>
<circle cx="803" cy="333.5" r="38.3" stroke="#8b9bab" stroke-width="1.4" opacity="0.55"/>
<circle cx="803" cy="333.5" r="36.5" stroke="#7d8d9d" stroke-width="1" opacity="0.6"/>
<circle cx="803" cy="333.5" r="31.2" stroke="#6a7a8a" stroke-width="1" opacity="0.55"/>
</g>
<path d="M787.5 331.5h31v4h-31z M801 318.5h4v31h-4z" fill="#c8c8c8"/>
<circle cx="812" cy="340.4" r="4.6" fill="none" stroke="#b08a20" stroke-width="1"/>
<text x="820" y="358.5" font-family="Liberation Sans" font-size="14" fill="#ecb82a">Schnittpunkt</text>
</svg><svg class="a" style="left:0;top:0" width="1500" height="844" viewBox="0 0 1500 844"><defs>
<linearGradient id="lens" x1="0" y1="0" x2="0" y2="1"><stop offset="0" stop-color="#a9c6ec"/><stop offset="0.5" stop-color="#6d9ddf"/><stop offset="1" stop-color="#8ab6ee"/></linearGradient>
<linearGradient id="flop" x1="0" y1="0" x2="0" y2="1"><stop offset="0" stop-color="#5d8ff0"/><stop offset="1" stop-color="#2f5fd0"/></linearGradient>
<radialGradient id="glow"><stop offset="0" stop-color="#ffffe0"/><stop offset="0.25" stop-color="#f4ee40"/><stop offset="0.7" stop-color="#eee020" stop-opacity="0.85"/><stop offset="1" stop-color="#eee020" stop-opacity="0"/></radialGradient>
<linearGradient id="pg" x1="0" y1="0" x2="1" y2="1"><stop offset="0" stop-color="#f4f4f4"/><stop offset="1" stop-color="#e0e0e0"/></linearGradient>
</defs>
<rect x="7" y="32" width="2" height="2" fill="#9a9a9a"/><rect x="7" y="38" width="2" height="2" fill="#9a9a9a"/><rect x="7" y="44" width="2" height="2" fill="#9a9a9a"/><rect x="7" y="50" width="2" height="2" fill="#9a9a9a"/><rect x="7" y="56" width="2" height="2" fill="#9a9a9a"/>
<path d="M27.5 35.5 L27.5 52 L31.6 48.3 L35.2 56 L38 54.6 L34.6 47.2 L38.8 46.8 Z" fill="#fff" stroke="#3a3a3a" stroke-width="1" stroke-linejoin="miter"/>
<rect x="87" y="32" width="2" height="2" fill="#9a9a9a"/><rect x="87" y="38" width="2" height="2" fill="#9a9a9a"/><rect x="87" y="44" width="2" height="2" fill="#9a9a9a"/><rect x="87" y="50" width="2" height="2" fill="#9a9a9a"/><rect x="87" y="56" width="2" height="2" fill="#9a9a9a"/>
<rect x="100.5" y="32.5" width="24" height="27" rx="1.5" fill="url(#pg)" stroke="#8a8a8a" stroke-width="1"/>
<line x1="101" y1="60.5" x2="124" y2="60.5" stroke="#777" stroke-width="1.2"/>
<circle cx="120.8" cy="37.5" r="7.5" fill="url(#glow)"/>
<path d="M143.5 35.5 h5 l1.5 -1 v22 l-5.5 2.5z" fill="#9a9a9a" stroke="#777" stroke-width="0.7"/>
<path d="M150.5 32.5 h21.5 l-1.5 22 h-22z" fill="#f6f6f6" stroke="#999" stroke-width="0.7"/>
<path d="M153 35.5h15 M153 37h15" stroke="#c8c8c8" stroke-width="1"/>
<path d="M148 35 l2.5-1 l-3 22" fill="none" stroke="#888" stroke-width="0.8"/>
<defs><linearGradient id="fold" x1="0" y1="0" x2="0" y2="1"><stop offset="0" stop-color="#7aaee8"/><stop offset="1" stop-color="#5a8fd0"/></linearGradient></defs>
<path d="M150 43 h25 l-3.5 14.5 h-25z" fill="url(#fold)" stroke="#4a7ab8" stroke-width="0.7"/>
<line x1="186.5" y1="26" x2="186.5" y2="66" stroke="#7a7a7a" stroke-width="1" stroke-dasharray="1 2"/>
<defs><linearGradient id="flop2" x1="0" y1="0" x2="1" y2="1"><stop offset="0" stop-color="#79a6f6"/><stop offset="1" stop-color="#3f73e6"/></linearGradient><linearGradient id="lab" x1="0" y1="0" x2="1" y2="1"><stop offset="0" stop-color="#f4f8ff"/><stop offset="1" stop-color="#d8e4fa"/></linearGradient></defs>
<rect x="202.5" y="33.3" width="24.5" height="25" rx="2.5" fill="url(#flop2)" stroke="#2a3ca8" stroke-width="1.1"/><rect x="206.2" y="34.3" width="17" height="10.6" fill="url(#lab)"/><rect x="208.5" y="48.3" width="12.5" height="9.5" fill="#e2e2ea"/><rect x="210.5" y="50.5" width="2" height="4.5" fill="#2a4ab0"/>
<rect x="248.5" y="33.3" width="24.5" height="25" rx="2.5" fill="url(#flop2)" stroke="#2a3ca8" stroke-width="1.1"/><rect x="252.2" y="34.3" width="17" height="10.6" fill="url(#lab)"/><rect x="254.5" y="48.3" width="12.5" height="9.5" fill="#e2e2ea"/><rect x="256.5" y="50.5" width="2" height="4.5" fill="#2a4ab0"/>
<path d="M259.5 49.5 L272.5 35 L276.5 38.5 L263 53 L258.5 54.5 Z" fill="#f4b22c" stroke="#9a4a10" stroke-width="0.8"/>
<path d="M272.5 35 L274.3 33 L278.3 36.5 L276.5 38.5Z" fill="#e84030" stroke="#9a3010" stroke-width="0.6"/>
<path d="M258.5 54.5 L259.5 51 L261.5 53.2Z" fill="#333"/>
<line x1="288.5" y1="26" x2="288.5" y2="66" stroke="#7a7a7a" stroke-width="1" stroke-dasharray="1 2"/>
<rect x="305" y="43" width="24" height="15" rx="3.2" fill="#0a0a0a"/>
<line x1="317" y1="45" x2="308.70" y2="45.00" stroke="#0a0a0a" stroke-width="4"/><circle cx="308.70" cy="45.00" r="3.3" fill="#0a0a0a"/><line x1="317" y1="45" x2="310.64" y2="39.66" stroke="#0a0a0a" stroke-width="4"/><circle cx="310.64" cy="39.66" r="3.3" fill="#0a0a0a"/><line x1="317" y1="45" x2="317.00" y2="36.70" stroke="#0a0a0a" stroke-width="4"/><circle cx="317.00" cy="36.70" r="3.3" fill="#0a0a0a"/><line x1="317" y1="45" x2="323.36" y2="39.66" stroke="#0a0a0a" stroke-width="4"/><circle cx="323.36" cy="39.66" r="3.3" fill="#0a0a0a"/><line x1="317" y1="45" x2="325.30" y2="45.00" stroke="#0a0a0a" stroke-width="4"/><circle cx="325.30" cy="45.00" r="3.3" fill="#0a0a0a"/><line x1="317" y1="45" x2="308.70" y2="45.00" stroke="#f5a623" stroke-width="1.8"/><circle cx="308.70" cy="45.00" r="2.3" fill="#f5a623"/><line x1="317" y1="45" x2="310.64" y2="39.66" stroke="#f5a623" stroke-width="1.8"/><circle cx="310.64" cy="39.66" r="2.3" fill="#f5a623"/><line x1="317" y1="45" x2="317.00" y2="36.70" stroke="#f5a623" stroke-width="1.8"/><circle cx="317.00" cy="36.70" r="2.3" fill="#f5a623"/><line x1="317" y1="45" x2="323.36" y2="39.66" stroke="#f5a623" stroke-width="1.8"/><circle cx="323.36" cy="39.66" r="2.3" fill="#f5a623"/><line x1="317" y1="45" x2="325.30" y2="45.00" stroke="#f5a623" stroke-width="1.8"/><circle cx="325.30" cy="45.00" r="2.3" fill="#f5a623"/>
<rect x="307" y="44.6" width="20" height="1.4" fill="#f5a623"/>
<text transform="translate(317.2,56.4) scale(0.69,1)" x="0" y="0" font-family="Liberation Sans" font-weight="bold" font-size="13" fill="#fff" text-anchor="middle">SVG</text>
<line x1="344.6" y1="26" x2="344.6" y2="66" stroke="#7a7a7a" stroke-width="1" stroke-dasharray="1 2"/>
<defs><linearGradient id="prb" x1="0" y1="0" x2="0" y2="1"><stop offset="0" stop-color="#f6f6f6"/><stop offset="0.6" stop-color="#e0e0e0"/><stop offset="1" stop-color="#c4c4c4"/></linearGradient></defs>
<rect x="363.5" y="32" width="18.5" height="13" rx="1" fill="#e2e2e2" stroke="#c4c4c4" stroke-width="0.8"/>
<rect x="366" y="34" width="13" height="2" fill="#d0d0d0"/>
<path d="M360 46 Q360 43.5 362.5 43.5 H384 Q386.5 43.5 386.5 46 V56 Q386.5 58 384.5 58 H362 Q360 58 360 56Z" fill="url(#prb)" stroke="#a8a8a8" stroke-width="0.8"/>
<rect x="362.5" y="47.5" width="21.5" height="2.5" fill="#fafafa" stroke="#c8c8c8" stroke-width="0.5"/>
<line x1="372.5" y1="45.5" x2="380.5" y2="52" stroke="#888" stroke-width="3" stroke-linecap="round"/>
<line x1="372.5" y1="45.5" x2="380.5" y2="52" stroke="#d8d8d8" stroke-width="1.6" stroke-linecap="round"/>
<circle cx="368.3" cy="40.7" r="6.3" fill="#f2f2f2"/>
<defs><radialGradient id="pl" cx="0.4" cy="0.35"><stop offset="0" stop-color="#eef4fc"/><stop offset="1" stop-color="#9cb8e0"/></radialGradient></defs>
<circle cx="368.3" cy="40.7" r="5.3" fill="url(#pl)" stroke="#5a88d0" stroke-width="1"/>
<rect x="402" y="32" width="2" height="2" fill="#9a9a9a"/><rect x="402" y="38" width="2" height="2" fill="#9a9a9a"/><rect x="402" y="44" width="2" height="2" fill="#9a9a9a"/><rect x="402" y="50" width="2" height="2" fill="#9a9a9a"/><rect x="402" y="56" width="2" height="2" fill="#9a9a9a"/>
<defs><linearGradient id="ug" x1="0" y1="0" x2="1" y2="0.4"><stop offset="0" stop-color="#8fd47a"/><stop offset="1" stop-color="#2f9f45"/></linearGradient><linearGradient id="rg" x1="1" y1="0" x2="0" y2="0.4"><stop offset="0" stop-color="#c0e4b0"/><stop offset="1" stop-color="#86c898"/></linearGradient></defs>
<path d="M413.6 37.4 L417.4 42.1 C421 37 426 34 431.5 34 C437.5 34 442 38.5 442 45 C442 51.5 436 57 426.2 57.5 C433 55 436.7 50.5 436.7 45.6 C436.7 42 434 40.3 430.3 40.3 C427 40.3 424.5 42.5 422.1 46.2 L426.8 51.8 L413.6 51.8 Z" fill="url(#ug)" stroke="#18782a" stroke-width="1"/>
<path d="M413.6 37.4 L417.4 42.1 C421 37 426 34 431.5 34 C437.5 34 442 38.5 442 45 C442 51.5 436 57 426.2 57.5 C433 55 436.7 50.5 436.7 45.6 C436.7 42 434 40.3 430.3 40.3 C427 40.3 424.5 42.5 422.1 46.2 L426.8 51.8 L413.6 51.8 Z" transform="matrix(-1,0,0,1,901.9,0)" fill="url(#rg)" stroke="#74b888" stroke-width="1"/>
<line x1="501.3" y1="26" x2="501.3" y2="66" stroke="#7a7a7a" stroke-width="1" stroke-dasharray="1 2"/>
<ellipse cx="530" cy="57" rx="12" ry="1.8" fill="#000" opacity="0.07"/>
<path d="M517 52 L533 35 L541 42 L525 58 Z" fill="#e79a9a" stroke="#c88" stroke-width="0.8"/>
<path d="M517 52 L522 47 L530 54 L525 58 Z" fill="#f4f4f4" stroke="#bbb" stroke-width="0.8"/>
<path d="M525 44 L535 37.5 L538 40 L528 46.5Z" fill="#f6e6e6"/>
<line x1="557.3" y1="26" x2="557.3" y2="66" stroke="#7a7a7a" stroke-width="1" stroke-dasharray="1 2"/>
<path d="M586 48 L587 31 L590 32 L590 46 Z" fill="#f0f0f0" stroke="#aaa" stroke-width="0.8"/>
<path d="M589 48 L599 38 L600 41 L591 50 Z" fill="#f0f0f0" stroke="#aaa" stroke-width="0.8"/>
<ellipse cx="582" cy="48" rx="5" ry="3.5" fill="none" stroke="#e08a8a" stroke-width="2.5"/>
<ellipse cx="588" cy="56" rx="2.5" ry="4.5" fill="none" stroke="#e08a8a" stroke-width="2.5"/>
<path d="M573 57.5 h6 M576 54.5 v6" stroke="#555" stroke-width="1"/>
<path d="M618 30.5 h14 l3 3 v19 h-17z" fill="#f4f4f4" stroke="#c8c8c8" stroke-width="0.8"/>
<path d="M625.5 36.5 h20 v18 l-4 4 h-16z" fill="#f6f6f6" stroke="#c0c0c0" stroke-width="0.8"/>
<path d="M629 43h13 M629 45.5h13 M629 48h13" stroke="#d4d4d4" stroke-width="0.8"/>
<path d="M618 57h6 M621 54v6" stroke="#555" stroke-width="1"/>
<rect x="664.5" y="32.5" width="26" height="28" rx="1.5" fill="#c48a2a" stroke="#9a6a1a" stroke-width="0.8"/>
<path d="M667 35 h21 v21 l-4 3 h-17z" fill="#f8f8f8"/>
<path d="M671 40.5h14 M671 43.5h14 M671 46.5h14 M671 49.5h12 M671 52h8" stroke="#c4c4c4" stroke-width="0.8"/>
<rect x="672" y="30" width="11" height="5" rx="1.5" fill="#9a9a90" stroke="#707068" stroke-width="0.6"/>
<rect x="707" y="32" width="2" height="2" fill="#9a9a9a"/><rect x="707" y="38" width="2" height="2" fill="#9a9a9a"/><rect x="707" y="44" width="2" height="2" fill="#9a9a9a"/><rect x="707" y="50" width="2" height="2" fill="#9a9a9a"/><rect x="707" y="56" width="2" height="2" fill="#9a9a9a"/>
<path d="M728.90 53.87 L744.31 38.86 A2.6 2.6 0 0 0 740.69 35.14 L725.27 50.15 Z" fill="#e8382a" stroke="#8a2a10" stroke-width="0.8"/>
<path d="M727.24 50.74 L741.23 37.12" stroke="#f89080" stroke-width="1"/>
<path d="M740.73 42.35 L742.02 41.10 L738.39 37.37 L737.10 38.63 Z" fill="#c8c8c8" stroke="#8a8a8a" stroke-width="0.5"/>
<path d="M723.50 55.50 L728.90 53.87 L725.27 50.15 Z" fill="#f2d2a0" stroke="#8a5a18" stroke-width="0.6"/>
<path d="M723.50 55.50 L725.42 54.89 L724.16 53.60 Z" fill="#222"/>
<rect x="722" y="56" width="22" height="1" fill="#f00"/>
<rect x="765" y="35.5" width="28.5" height="21.5" fill="#00007f" stroke="#111" stroke-width="1"/>
<path d="M769 54 L790 39 L790 54 Z" fill="none" stroke="#fff" stroke-width="1.3" stroke-dasharray="2.5 1.5"/>
<rect x="804" y="25" width="43" height="42" rx="4" fill="#b9b9b9"/>
<circle cx="825" cy="45.5" r="13" fill="none" stroke="#000" stroke-width="2"/>
<line x1="811" y1="60" x2="839" y2="32" stroke="#0000ff" stroke-width="1.2"/>
<line x1="853.6" y1="26" x2="853.6" y2="66" stroke="#7a7a7a" stroke-width="1" stroke-dasharray="1 2"/>
<rect x="861" y="25" width="43" height="42" rx="4" fill="#b9b9b9"/>
<rect x="869" y="33" width="2" height="2" fill="#000"/>
<rect x="869" y="41" width="2" height="2" fill="#000"/>
<rect x="869" y="49" width="2" height="2" fill="#000"/>
<rect x="869" y="57" width="2" height="2" fill="#000"/>
<rect x="877" y="33" width="2" height="2" fill="#000"/>
<rect x="877" y="41" width="2" height="2" fill="#000"/>
<rect x="877" y="49" width="2" height="2" fill="#000"/>
<rect x="877" y="57" width="2" height="2" fill="#000"/>
<rect x="885" y="33" width="2" height="2" fill="#000"/>
<rect x="885" y="41" width="2" height="2" fill="#000"/>
<rect x="885" y="49" width="2" height="2" fill="#000"/>
<rect x="885" y="57" width="2" height="2" fill="#000"/>
<rect x="893" y="33" width="2" height="2" fill="#000"/>
<rect x="893" y="41" width="2" height="2" fill="#000"/>
<rect x="893" y="49" width="2" height="2" fill="#000"/>
<rect x="893" y="57" width="2" height="2" fill="#000"/>
<line x1="910.6" y1="26" x2="910.6" y2="66" stroke="#7a7a7a" stroke-width="1" stroke-dasharray="1 2"/>
<g><ellipse cx="938.8" cy="56.8" rx="12" ry="3" fill="#000" opacity="0.08"/><line x1="943.8" y1="50.8" x2="950.8" y2="57.8" stroke="#6a6a6a" stroke-width="4" stroke-linecap="round"/><circle cx="934.8" cy="41.8" r="11.5" fill="#d8d8d0" stroke="#b8b8b0" stroke-width="1"/><circle cx="934.8" cy="41.8" r="9.5" fill="url(#lens)"/><path d="M928.5 41.8 h12.6 M934.8 35.5 v12.6" stroke="#fff" stroke-width="3.2"/></g>
<g><ellipse cx="985.3" cy="56.8" rx="12" ry="3" fill="#000" opacity="0.08"/><line x1="990.3" y1="50.8" x2="997.3" y2="57.8" stroke="#6a6a6a" stroke-width="4" stroke-linecap="round"/><circle cx="981.3" cy="41.8" r="11.5" fill="#d8d8d0" stroke="#b8b8b0" stroke-width="1"/><circle cx="981.3" cy="41.8" r="9.5" fill="url(#lens)"/><path d="M975 41.8 h12.6" stroke="#fff" stroke-width="3.2"/></g>
<g><ellipse cx="1030.8" cy="56.8" rx="12" ry="3" fill="#000" opacity="0.08"/><line x1="1035.8" y1="50.8" x2="1042.8" y2="57.8" stroke="#6a6a6a" stroke-width="4" stroke-linecap="round"/><circle cx="1026.8" cy="41.8" r="11.5" fill="#d8d8d0" stroke="#b8b8b0" stroke-width="1"/><circle cx="1026.8" cy="41.8" r="9.5" fill="url(#lens)"/><path d="M1020.8 39.8 v-4 h4 M1028.8 35.8 h4 v4 M1032.8 43.8 v4 h-4 M1024.8 47.8 h-4 v-4" fill="none" stroke="#fff" stroke-width="2"/></g>
<g opacity="0.45"><ellipse cx="1077" cy="56.8" rx="12" ry="3" fill="#000" opacity="0.08"/><line x1="1082" y1="50.8" x2="1089" y2="57.8" stroke="#6a6a6a" stroke-width="4" stroke-linecap="round"/><circle cx="1073" cy="41.8" r="11.5" fill="#d8d8d0" stroke="#b8b8b0" stroke-width="1"/><circle cx="1073" cy="41.8" r="9.5" fill="url(#lens)"/><path d="M1067 39.8 v-4 h4 M1075 35.8 h4 v4 M1079 43.8 v4 h-4 M1071 47.8 h-4 v-4" fill="none" stroke="#e03030" stroke-width="2"/></g>
<g><ellipse cx="1123.3" cy="57" rx="12" ry="3" fill="#000" opacity="0.08"/><line x1="1128.3" y1="51" x2="1135.3" y2="58" stroke="#6a6a6a" stroke-width="4" stroke-linecap="round"/><circle cx="1119.3" cy="42" r="11.5" fill="#d8d8d0" stroke="#b8b8b0" stroke-width="1"/><circle cx="1119.3" cy="42" r="9.5" fill="url(#lens)"/><path d="M1113 42 l5.5-5 v3 h7 v4 h-7 v3z" fill="#fff"/></g>
<rect x="1153.5" y="30.5" width="27.5" height="18" rx="1" fill="#fff" stroke="#6a8fd0" stroke-width="1"/>
<g><ellipse cx="1171.5" cy="59.5" rx="12" ry="3" fill="#000" opacity="0.08"/><line x1="1176.5" y1="53.5" x2="1183.5" y2="60.5" stroke="#6a6a6a" stroke-width="4" stroke-linecap="round"/><circle cx="1167.5" cy="44.5" r="11.5" fill="#d8d8d0" stroke="#b8b8b0" stroke-width="1"/><circle cx="1167.5" cy="44.5" r="9.5" fill="url(#lens)"/></g>
<g><ellipse cx="1216" cy="58" rx="12" ry="3" fill="#000" opacity="0.08"/><line x1="1221" y1="52" x2="1228" y2="59" stroke="#6a6a6a" stroke-width="4" stroke-linecap="round"/><circle cx="1212" cy="43" r="11.5" fill="#d8d8d0" stroke="#b8b8b0" stroke-width="1"/><circle cx="1212" cy="43" r="9.5" fill="url(#lens)"/><path d="M1212 32 v22 M1201 43 h22" stroke="#fff" stroke-width="2.4"/><path d="M1212 30.5 l-3 4 h6z M1212 55.5 l-3-4 h6z M1199.5 43 l4-3 v6z M1224.5 43 l-4-3 v6z" fill="#fff" stroke="#6a8fd0" stroke-width="0.6"/></g><rect x="7" y="77" width="2" height="2" fill="#9a9a9a"/><rect x="7" y="83" width="2" height="2" fill="#9a9a9a"/><rect x="7" y="89" width="2" height="2" fill="#9a9a9a"/><rect x="7" y="95" width="2" height="2" fill="#9a9a9a"/>
<rect x="15.5" y="73.5" width="42" height="30.5" rx="5" fill="url(#btng)" stroke="#8a8a8a" stroke-width="2"/>
<defs><linearGradient id="btng" x1="0" y1="0" x2="0" y2="1"><stop offset="0" stop-color="#f8f8f8"/><stop offset="1" stop-color="#e4e4e4"/></linearGradient></defs>
<line x1="24.5" y1="88.5" x2="43" y2="79" stroke="#ff2020" stroke-width="1.2"/>
<line x1="29" y1="96.5" x2="47.5" y2="88" stroke="#222" stroke-width="1.2"/>
<circle cx="34.5" cy="93.8" r="1.8" fill="#f00"/>
<line x1="67.5" y1="71" x2="67.5" y2="105" stroke="#7a7a7a" stroke-width="1" stroke-dasharray="1 2"/>
<text x="83" y="94" font-family="Liberation Sans" font-size="13.3" fill="#1c1c1c">Anzahl:</text>
<rect x="142.5" y="80" width="60.5" height="16" fill="#fff"/>
<line x1="142.5" y1="96" x2="203" y2="96" stroke="#d8d8d8"/>
<text x="144" y="93.5" font-family="Liberation Sans" font-size="14" fill="#111">1</text>
<rect x="206" y="78" width="12" height="20" rx="5" fill="#fff" stroke="#e0e0e0" stroke-width="0.6"/>
<path d="M209 85 l3-3 l3 3 M209 91 l3 3 l3-3" fill="none" stroke="#111" stroke-width="1.1"/>
<line x1="225.5" y1="71" x2="225.5" y2="105" stroke="#7a7a7a" stroke-width="1" stroke-dasharray="1 2"/>
<text x="241" y="93.6" font-family="Liberation Sans" font-size="13.3" fill="#1c1c1c">Polylinienmodus:</text>
<rect x="355.2" y="70" width="42.4" height="37" rx="3.5" fill="#b9b9b9"/>
<path d="M365.5 99.5 V84.5 H372 V77 H387.5 V99.5" fill="none" stroke="#ff1a1a" stroke-width="1.4"/>
<path d="M368.5 99.5 V88 H375 V81 H384 V99.5" fill="none" stroke="#222" stroke-width="1.4"/>
<path d="M414.5 100 V87 H422 V80 H431 V100" fill="none" stroke="#555" stroke-width="1.6"/>
<rect x="422" y="79" width="9.5" height="2" fill="#3a3aff"/>
<rect x="423" y="75.3" width="8.5" height="2" fill="#ff5a5a"/>
<line x1="450.5" y1="71" x2="450.5" y2="105" stroke="#7a7a7a" stroke-width="1" stroke-dasharray="1 2"/>
<text x="466" y="93.6" font-family="Liberation Sans" font-size="13.3" fill="#1c1c1c">Verbindungsart:</text>
<rect x="575.3" y="70" width="42.2" height="37" rx="3.5" fill="#b9b9b9"/>
<path d="M589.5 99 V88 Q589.5 81 596.5 81 H607" fill="none" stroke="#ff2a2a" stroke-width="1.4"/>
<path d="M596.7 99.5 V88.3 H607" fill="none" stroke="#222" stroke-width="1.4"/>
<path d="M634.5 99.5 V79.5 H655" fill="none" stroke="#ff4040" stroke-width="1.5"/>
<path d="M643 99.5 V87.5 H655" fill="none" stroke="#444" stroke-width="1.5"/>
<line x1="670.5" y1="71" x2="670.5" y2="105" stroke="#7a7a7a" stroke-width="1" stroke-dasharray="1 2"/>
<rect x="685" y="81" width="13" height="14" rx="3" fill="#fff" stroke="#dcdcdc" stroke-width="0.6"/>
<path d="M688 88.5 L690.8 91.8 L695.5 84" fill="none" stroke="#111" stroke-width="1.7"/>
<text x="704.5" y="93.6" font-family="Liberation Sans" font-size="13.3" fill="#1c1c1c">Zuschneiden</text>
<line x1="794" y1="71" x2="794" y2="105" stroke="#7a7a7a" stroke-width="1" stroke-dasharray="1 2"/><defs><linearGradient id="lbg" x1="0" y1="0" x2="0" y2="1"><stop offset="0" stop-color="#e6e6e6"/><stop offset="0.5" stop-color="#f2f2f2"/><stop offset="1" stop-color="#f7f7f7"/></linearGradient>
<linearGradient id="lpr" x1="0" y1="0" x2="0" y2="1"><stop offset="0" stop-color="#bdbdbd"/><stop offset="1" stop-color="#c8c8c8"/></linearGradient></defs>
<rect x="7" y="116" width="2" height="2" fill="#a8a8a8"/>
<rect x="13" y="116" width="2" height="2" fill="#a8a8a8"/>
<rect x="19" y="116" width="2" height="2" fill="#a8a8a8"/>
<rect x="25" y="116" width="2" height="2" fill="#a8a8a8"/>
<rect x="31" y="116" width="2" height="2" fill="#a8a8a8"/>
<rect x="37" y="116" width="2" height="2" fill="#a8a8a8"/>
<rect x="43" y="116" width="2" height="2" fill="#a8a8a8"/>
<rect x="49" y="116" width="2" height="2" fill="#a8a8a8"/>
<rect x="55" y="116" width="2" height="2" fill="#a8a8a8"/>
<rect x="61" y="116" width="2" height="2" fill="#a8a8a8"/>
<rect x="1.75" y="121.25" width="68.5" height="23.5" fill="url(#lbg)" stroke="#9c9c9c" stroke-width="1.5"/>
<path d="M32 133 L40 128.8 L40 137.2Z" fill="#000"/>
<rect x="1.75" y="157.25" width="33" height="32.5" fill="url(#lbg)" stroke="#9c9c9c" stroke-width="1.5"/>
<rect x="36.25" y="157.25" width="34" height="32.5" fill="url(#lbg)" stroke="#9c9c9c" stroke-width="1.5"/>
<rect x="1.75" y="200.25" width="33" height="32.5" fill="url(#lbg)" stroke="#9c9c9c" stroke-width="1.5"/>
<rect x="36.25" y="200.25" width="34" height="32.5" fill="url(#lbg)" stroke="#9c9c9c" stroke-width="1.5"/>
<rect x="1.75" y="234.25" width="33" height="33.5" fill="url(#lbg)" stroke="#9c9c9c" stroke-width="1.5"/>
<rect x="36.25" y="234.25" width="34" height="33.5" fill="url(#lbg)" stroke="#9c9c9c" stroke-width="1.5"/>
<rect x="1.75" y="269.25" width="33" height="33" fill="url(#lbg)" stroke="#9c9c9c" stroke-width="1.5"/>
<rect x="36.25" y="269.25" width="34" height="33" fill="url(#lbg)" stroke="#9c9c9c" stroke-width="1.5"/>
<rect x="1.75" y="313.25" width="33" height="32.5" fill="url(#lbg)" stroke="#9c9c9c" stroke-width="1.5"/>
<rect x="36.25" y="313.25" width="34" height="32.5" fill="url(#lbg)" stroke="#9c9c9c" stroke-width="1.5"/>
<rect x="1.75" y="356.25" width="33" height="32.8" fill="url(#lbg)" stroke="#9c9c9c" stroke-width="1.5"/>
<rect x="36.25" y="356.25" width="34" height="32.8" fill="url(#lbg)" stroke="#9c9c9c" stroke-width="1.5"/>
<rect x="1.75" y="399.35" width="33" height="32.7" fill="url(#lbg)" stroke="#9c9c9c" stroke-width="1.5"/>
<rect x="36.25" y="399.35" width="34" height="32.7" fill="url(#lbg)" stroke="#9c9c9c" stroke-width="1.5"/>
<rect x="1.75" y="484.95" width="33" height="32.8" fill="url(#lbg)" stroke="#9c9c9c" stroke-width="1.5"/>
<rect x="36.25" y="484.95" width="34" height="32.8" fill="url(#lbg)" stroke="#9c9c9c" stroke-width="1.5"/>
<rect x="1.75" y="528.15" width="33" height="32.7" fill="url(#lbg)" stroke="#9c9c9c" stroke-width="1.5"/>
<rect x="36.25" y="528.15" width="34" height="32.7" fill="url(#lbg)" stroke="#9c9c9c" stroke-width="1.5"/>
<rect x="1.75" y="570.95" width="33" height="32.8" fill="url(#lbg)" stroke="#9c9c9c" stroke-width="1.5"/>
<rect x="1.5" y="613.6" width="33.5" height="33.4" rx="4" fill="url(#lpr)" stroke="#a6a6a6" stroke-width="1"/>
<rect x="36.25" y="613.85" width="34" height="32.9" fill="url(#lbg)" stroke="#9c9c9c" stroke-width="1.5"/>
<rect x="1.75" y="648.25" width="33" height="33.4" fill="url(#lbg)" stroke="#9c9c9c" stroke-width="1.5"/>
<rect x="36.25" y="648.25" width="34" height="33.4" fill="url(#lbg)" stroke="#9c9c9c" stroke-width="1.5"/>
<rect x="1.75" y="683.15" width="33" height="33.5" fill="url(#lbg)" stroke="#9c9c9c" stroke-width="1.5"/>
<rect x="1.75" y="727.15" width="33" height="32.2" fill="url(#lbg)" stroke="#9c9c9c" stroke-width="1.5"/>
<rect x="36.25" y="727.15" width="34" height="32.2" fill="url(#lbg)" stroke="#9c9c9c" stroke-width="1.5"/>
<rect x="1.75" y="770.25" width="33" height="29" fill="url(#lbg)" stroke="#9c9c9c" stroke-width="1.5"/>
<rect x="1.5" y="441.8" width="33.5" height="33.4" rx="4" fill="url(#lpr)" stroke="#a6a6a6" stroke-width="1"/>
<text x="18.2" y="462" font-family="Liberation Sans" font-size="11" fill="#111" text-anchor="middle">Auto</text>
<path d="M13.7 172.8h8 M17.7 168.8v8" fill="none" stroke="#111" stroke-width="1.1"/>
<circle cx="42.4" cy="162.3" r="1.7" fill="#ff0000"/>
<circle cx="42.4" cy="169.35" r="1.7" fill="#ff0000"/>
<circle cx="42.4" cy="176.4" r="1.7" fill="#ff0000"/>
<circle cx="42.4" cy="183.45" r="1.7" fill="#ff0000"/>
<circle cx="49.45" cy="162.3" r="1.7" fill="#ff0000"/>
<circle cx="49.45" cy="169.35" r="1.7" fill="#ff0000"/>
<circle cx="49.45" cy="176.4" r="1.7" fill="#ff0000"/>
<circle cx="49.45" cy="183.45" r="1.7" fill="#ff0000"/>
<circle cx="56.5" cy="162.3" r="1.7" fill="#ff0000"/>
<circle cx="56.5" cy="169.35" r="1.7" fill="#ff0000"/>
<circle cx="56.5" cy="176.4" r="1.7" fill="#ff0000"/>
<circle cx="56.5" cy="183.45" r="1.7" fill="#ff0000"/>
<circle cx="63.55" cy="162.3" r="1.7" fill="#ff0000"/>
<circle cx="63.55" cy="169.35" r="1.7" fill="#ff0000"/>
<circle cx="63.55" cy="176.4" r="1.7" fill="#ff0000"/>
<circle cx="63.55" cy="183.45" r="1.7" fill="#ff0000"/>
<line x1="7.4" y1="215.2" x2="28.4" y2="226.7" stroke="#222" stroke-width="1.1"/>
<circle cx="7.4" cy="215.2" r="1.8" fill="#ff0000"/>
<circle cx="28.4" cy="226.7" r="1.8" fill="#ff0000"/>
<path d="M15.7 205.5 Q17 217.5 28.4 218.2" fill="none" stroke="#222" stroke-width="1.1"/>
<circle cx="15.7" cy="205.5" r="1.8" fill="#ff0000"/>
<circle cx="28.4" cy="218.2" r="1.8" fill="#ff0000"/>
<path d="M42.4 216.3 L47.5 213.6 L52.9 211 L58.1 208 L63.7 204.9" fill="none" stroke="#222" stroke-width="1.1"/>
<circle cx="42.4" cy="216.3" r="1.6" fill="#ff0000"/>
<circle cx="47.5" cy="213.6" r="1.6" fill="#ff0000"/>
<circle cx="52.9" cy="211" r="1.6" fill="#ff0000"/>
<circle cx="58.1" cy="208" r="1.6" fill="#ff0000"/>
<circle cx="63.7" cy="204.9" r="1.6" fill="#ff0000"/>
<path d="M50.5 226.4 L52.1 221.3 L54.3 217.2 L58.3 214.7 L63.5 213.8" fill="none" stroke="#222" stroke-width="1.1"/>
<circle cx="50.5" cy="226.4" r="1.6" fill="#ff0000"/>
<circle cx="52.1" cy="221.3" r="1.6" fill="#ff0000"/>
<circle cx="54.3" cy="217.2" r="1.6" fill="#ff0000"/>
<circle cx="58.3" cy="214.7" r="1.6" fill="#ff0000"/>
<circle cx="63.5" cy="213.8" r="1.6" fill="#ff0000"/>
<line x1="9.6" y1="241.1" x2="19.3" y2="252.4" stroke="#222" stroke-width="1.1"/>
<line x1="19.3" y1="252.4" x2="28.5" y2="248.8" stroke="#222" stroke-width="1.1"/>
<path d="M19.3 252.4 Q16 255 15.4 261.1" fill="none" stroke="#222" stroke-width="1.1"/>
<path d="M16.5 247 Q20 244 24 247.5" fill="none" stroke="#666" stroke-width="0.8" stroke-dasharray="1 1"/>
<circle cx="19.3" cy="252.4" r="1.8" fill="#ff0000"/>
<circle cx="56.3" cy="248.2" r="7" fill="none" stroke="#222" stroke-width="1.1"/>
<line x1="43.1" y1="259.3" x2="50.9" y2="245.4" stroke="#222" stroke-width="1.1"/>
<circle cx="50.9" cy="245.4" r="1.8" fill="#ff0000"/>
<line x1="6.5" y1="286.7" x2="28.5" y2="275.8" stroke="#222" stroke-width="1.1"/>
<circle cx="17.6" cy="281.2" r="1.8" fill="#ff0000"/>
<path d="M15.4 296.6 Q16 284.5 28.5 283.6" fill="none" stroke="#222" stroke-width="1.1"/>
<circle cx="27.9" cy="296.3" r="1.8" fill="#ff0000"/>
<circle cx="52.9" cy="286" r="9.7" fill="none" stroke="#222" stroke-width="1.1"/>
<circle cx="52.9" cy="286" r="1.8" fill="#ff0000"/>
<circle cx="52.9" cy="276.3" r="1.8" fill="#ff0000"/>
<circle cx="52.9" cy="295.7" r="1.8" fill="#ff0000"/>
<circle cx="43.2" cy="286" r="1.8" fill="#ff0000"/>
<circle cx="62.6" cy="286" r="1.8" fill="#ff0000"/>
<line x1="6.9" y1="329.9" x2="28.8" y2="318.3" stroke="#222" stroke-width="1.1"/>
<circle cx="17.9" cy="324" r="1.8" fill="#ff0000"/>
<path d="M15.4 339.7 Q16 327.5 28.8 326.8" fill="none" stroke="#222" stroke-width="1.1"/>
<circle cx="19.3" cy="330.5" r="1.8" fill="#ff0000"/>
<rect x="41.3" y="319.7" width="23.4" height="18.7" fill="none" stroke="#333" stroke-width="1.6"/>
<line x1="43.5" y1="337" x2="63" y2="321" stroke="#999" stroke-width="0.8" stroke-dasharray="1.5 1.5"/>
<circle cx="52.9" cy="329" r="1.8" fill="#ff0000"/>
<line x1="8" y1="372.8" x2="28.8" y2="361.2" stroke="#222" stroke-width="1.1"/>
<circle cx="15" cy="369" r="1.8" fill="#ff0000"/>
<path d="M6 366.5 L12 364 L10.5 367.5Z" fill="#111" stroke="#111" stroke-width="1"/>
<path d="M16.2 382.4 Q17 370 28.8 369.3" fill="none" stroke="#222" stroke-width="1.1"/>
<circle cx="18.8" cy="374.2" r="1.8" fill="#ff0000"/>
<path d="M20 383 L21 376 L23 379Z" fill="#111" stroke="#111" stroke-width="1"/>
<line x1="41.6" y1="372.8" x2="63.2" y2="361.2" stroke="#222" stroke-width="1" stroke-dasharray="2 1.5"/>
<circle cx="63.2" cy="361.2" r="1.3" fill="#111"/>
<circle cx="41.9" cy="372.5" r="1.3" fill="#111"/>
<path d="M41 368 L46 365.5 L45 368.5Z" fill="#111" stroke="#111" stroke-width="1"/>
<circle cx="49.6" cy="368.6" r="1.8" fill="#ff0000"/>
<text x="60.7" y="374.5" font-family="Liberation Sans" font-size="10.5" fill="#111">2</text>
<text x="40.6" y="384.5" font-family="Liberation Sans" font-size="10.5" fill="#111">1</text>
<line x1="5.7" y1="412.4" x2="30" y2="420.1" stroke="#222" stroke-width="1.1"/>
<line x1="24.4" y1="402.8" x2="18.5" y2="427" stroke="#222" stroke-width="1.1"/>
<circle cx="20.8" cy="417.3" r="1.8" fill="#ff0000"/>
<line x1="43.1" y1="416.3" x2="53.2" y2="419.8" stroke="#222" stroke-width="1.1"/>
<line x1="62.4" y1="407" x2="60.1" y2="417" stroke="#222" stroke-width="1.1"/>
<circle cx="58.5" cy="421.6" r="1.8" fill="#ff0000"/>
<text x="6" y="497.5" font-family="Liberation Sans" font-size="11" fill="#111">y</text>
<path d="M14.6 489.6 V504.3 H30.4" fill="none" stroke="#222" stroke-width="1.1"/>
<text x="24.5" y="512.5" font-family="Liberation Sans" font-size="11" fill="#111">x</text>
<circle cx="28" cy="490.7" r="1.6" fill="#ff0000"/>
<path d="M64.4 510.2 H41.3 L57.8 493.5 Q63.5 500 64.4 510.2" fill="none" stroke="#222" stroke-width="1.1"/>
<circle cx="57.8" cy="493.5" r="1.8" fill="#ff0000"/>
<text x="44.5" y="500.5" font-family="Liberation Sans" font-size="10" fill="#111">r</text>
<text x="54.5" y="507.5" font-family="Liberation Sans" font-size="10" fill="#111">α</text>
<path d="M25.9 535.9 H9.6 V551.6" fill="none" stroke="#bbb" stroke-width="1"/>
<circle cx="9.6" cy="535.9" r="2.2" fill="#ff0000"/>
<circle cx="25.9" cy="535.9" r="1.3" fill="#111"/>
<circle cx="10" cy="551.6" r="1.3" fill="#111"/>
<text x="23.6" y="546.5" font-family="Liberation Sans" font-size="10" fill="#111">2</text>
<text x="13.6" y="554.8" font-family="Liberation Sans" font-size="10" fill="#111">1</text>
<path d="M44.7 551.6 H60.9 V535.9" fill="none" stroke="#bbb" stroke-width="1"/>
<circle cx="60.9" cy="551.6" r="2.2" fill="#ff0000"/>
<circle cx="44.7" cy="551.6" r="1.3" fill="#111"/>
<circle cx="60.9" cy="535.9" r="1.3" fill="#111"/>
<text x="53" y="541.6" font-family="Liberation Sans" font-size="10" fill="#111">2</text>
<text x="42.8" y="549.3" font-family="Liberation Sans" font-size="10" fill="#111">1</text>
<path d="M8 578 H29 V596 H15 V591 H8 Z" fill="none" stroke="#f2a8a8" stroke-width="0.9"/>
<circle cx="13.8" cy="584.5" r="4" fill="none" stroke="#f2a8a8" stroke-width="0.9"/>
<path d="M17 591 L25 583 V591 Z" fill="none" stroke="#f2a8a8" stroke-width="0.9"/>
<circle cx="17.7" cy="587" r="1.6" fill="#ff0000"/>
<path d="M14.7 630h7 M18.2 626.5v7" fill="none" stroke="#333" stroke-width="1.2"/>
<line x1="40.8" y1="629.3" x2="64.4" y2="629.3" stroke="#111" stroke-width="1.1"/>
<line x1="52.7" y1="617.7" x2="52.7" y2="641.6" stroke="#111" stroke-width="1.1"/>
<circle cx="52.7" cy="629.3" r="3.3" fill="none" stroke="#f00" stroke-width="1.4"/><path d="M49.4 629.3h6.6 M52.7 626v6.6" fill="none" stroke="#f00" stroke-width="0.9"/>
<line x1="5.9" y1="664.4" x2="29.3" y2="664.4" stroke="#111" stroke-width="1.1"/>
<circle cx="17.4" cy="664.4" r="3.3" fill="none" stroke="#f00" stroke-width="1.4"/><path d="M14.1 664.4h6.6 M17.4 661.1v6.6" fill="none" stroke="#f00" stroke-width="0.9"/>
<line x1="52.7" y1="653.2" x2="52.7" y2="676.3" stroke="#111" stroke-width="1.1"/>
<circle cx="52.7" cy="664.4" r="3.3" fill="none" stroke="#f00" stroke-width="1.4"/><path d="M49.4 664.4h6.6 M52.7 661.1v6.6" fill="none" stroke="#f00" stroke-width="0.9"/>
<line x1="9.2" y1="688" x2="9.6" y2="692.7" stroke="#8a8a8a" stroke-width="1.4"/>
<line x1="14.9" y1="689" x2="13.7" y2="693.5" stroke="#8a8a8a" stroke-width="1.4"/>
<line x1="20" y1="691.4" x2="17.7" y2="695.4" stroke="#8a8a8a" stroke-width="1.4"/>
<line x1="24.3" y1="694.6" x2="21.3" y2="698" stroke="#8a8a8a" stroke-width="1.4"/>
<line x1="29.4" y1="704.4" x2="25.2" y2="705.5" stroke="#8a8a8a" stroke-width="1.4"/>
<line x1="29.9" y1="710.2" x2="25.2" y2="710.2" stroke="#8a8a8a" stroke-width="1.4"/>
<line x1="8.7" y1="708.7" x2="27.3" y2="698.4" stroke="#111" stroke-width="1.2"/>
<circle cx="8.7" cy="708.7" r="3.6" fill="none" stroke="#f00" stroke-width="1.4"/><path d="M5.1 708.7h7.2 M8.7 705.1v7.2" fill="none" stroke="#f00" stroke-width="0.9"/>
<circle cx="14.7" cy="737.3" r="3.3" fill="none" stroke="#f00" stroke-width="1.4"/><path d="M11.4 737.3h6.6 M14.7 734v6.6" fill="none" stroke="#f00" stroke-width="0.9"/>
<path d="M16.5 739.8 V751 L19 748.8 L21 753 L22.8 752.2 L20.8 748 L24 747.8Z" fill="#f4f4f4" stroke="#777" stroke-width="0.8"/>
<ellipse cx="46.3" cy="738.4" rx="2.6" ry="3.6" fill="none" stroke="#000" stroke-width="1.8"/><path d="M48.9 737.2h13v5h-1.5v-3h-1.5v3h-1.5v-3H48.9z" fill="#000"/>
<circle cx="52.5" cy="750.6" r="3.3" fill="none" stroke="#f00" stroke-width="1.4"/><path d="M49.2 750.6h6.6 M52.5 747.3v6.6" fill="none" stroke="#f00" stroke-width="0.9"/>
<ellipse cx="11" cy="785.4" rx="2.6" ry="3.6" fill="none" stroke="#000" stroke-width="1.8"/><path d="M13.6 784.2h13v5h-1.5v-3h-1.5v3h-1.5v-3H13.6z" fill="#000"/><circle cx="102.1" cy="118.7" r="5.2" fill="#f4f4f4" stroke="#2a3f8a" stroke-width="2.4"/>
<path d="M99 117.5h6 M102 115v6" stroke="#c06060" stroke-width="0.5"/>
<line x1="102.5" y1="119" x2="106.8" y2="123.3" stroke="#f0a020" stroke-width="2"/>
<circle cx="107.3" cy="123.8" r="1.2" fill="#e06060"/>
<text x="602.5" y="124.5" font-family="Liberation Sans" font-size="11" fill="#222">*</text>
<text x="610.5" y="124.3" font-family="Liberation Sans" font-size="12.5" fill="#222">offset.dxf</text>
<svg x="95" y="132" width="1044" height="23" viewBox="95 132 1044 23" overflow="hidden">
<text x="95.30" y="140.8" font-family="Liberation Sans" font-size="9" fill="#0a0a0a" text-anchor="middle">38</text>
<text x="117.80" y="140.8" font-family="Liberation Sans" font-size="9" fill="#0a0a0a" text-anchor="middle">39</text>
<text x="140.30" y="140.8" font-family="Liberation Sans" font-size="9" fill="#0a0a0a" text-anchor="middle">40</text>
<text x="162.80" y="140.8" font-family="Liberation Sans" font-size="9" fill="#0a0a0a" text-anchor="middle">41</text>
<text x="185.30" y="140.8" font-family="Liberation Sans" font-size="9" fill="#0a0a0a" text-anchor="middle">42</text>
<text x="207.80" y="140.8" font-family="Liberation Sans" font-size="9" fill="#0a0a0a" text-anchor="middle">43</text>
<text x="230.30" y="140.8" font-family="Liberation Sans" font-size="9" fill="#0a0a0a" text-anchor="middle">44</text>
<text x="252.80" y="140.8" font-family="Liberation Sans" font-size="9" fill="#0a0a0a" text-anchor="middle">45</text>
<text x="275.30" y="140.8" font-family="Liberation Sans" font-size="9" fill="#0a0a0a" text-anchor="middle">46</text>
<text x="297.80" y="140.8" font-family="Liberation Sans" font-size="9" fill="#0a0a0a" text-anchor="middle">47</text>
<text x="320.30" y="140.8" font-family="Liberation Sans" font-size="9" fill="#0a0a0a" text-anchor="middle">48</text>
<text x="342.80" y="140.8" font-family="Liberation Sans" font-size="9" fill="#0a0a0a" text-anchor="middle">49</text>
<text x="365.30" y="140.8" font-family="Liberation Sans" font-size="9" fill="#0a0a0a" text-anchor="middle">50</text>
<text x="387.80" y="140.8" font-family="Liberation Sans" font-size="9" fill="#0a0a0a" text-anchor="middle">51</text>
<text x="410.30" y="140.8" font-family="Liberation Sans" font-size="9" fill="#0a0a0a" text-anchor="middle">52</text>
<text x="432.80" y="140.8" font-family="Liberation Sans" font-size="9" fill="#0a0a0a" text-anchor="middle">53</text>
<text x="455.30" y="140.8" font-family="Liberation Sans" font-size="9" fill="#0a0a0a" text-anchor="middle">54</text>
<text x="477.80" y="140.8" font-family="Liberation Sans" font-size="9" fill="#0a0a0a" text-anchor="middle">55</text>
<text x="500.30" y="140.8" font-family="Liberation Sans" font-size="9" fill="#0a0a0a" text-anchor="middle">56</text>
<text x="522.80" y="140.8" font-family="Liberation Sans" font-size="9" fill="#0a0a0a" text-anchor="middle">57</text>
<text x="545.30" y="140.8" font-family="Liberation Sans" font-size="9" fill="#0a0a0a" text-anchor="middle">58</text>
<text x="567.80" y="140.8" font-family="Liberation Sans" font-size="9" fill="#0a0a0a" text-anchor="middle">59</text>
<text x="590.30" y="140.8" font-family="Liberation Sans" font-size="9" fill="#0a0a0a" text-anchor="middle">60</text>
<text x="612.80" y="140.8" font-family="Liberation Sans" font-size="9" fill="#0a0a0a" text-anchor="middle">61</text>
<text x="635.30" y="140.8" font-family="Liberation Sans" font-size="9" fill="#0a0a0a" text-anchor="middle">62</text>
<text x="657.80" y="140.8" font-family="Liberation Sans" font-size="9" fill="#0a0a0a" text-anchor="middle">63</text>
<text x="680.30" y="140.8" font-family="Liberation Sans" font-size="9" fill="#0a0a0a" text-anchor="middle">64</text>
<text x="702.80" y="140.8" font-family="Liberation Sans" font-size="9" fill="#0a0a0a" text-anchor="middle">65</text>
<text x="725.30" y="140.8" font-family="Liberation Sans" font-size="9" fill="#0a0a0a" text-anchor="middle">66</text>
<text x="747.80" y="140.8" font-family="Liberation Sans" font-size="9" fill="#0a0a0a" text-anchor="middle">67</text>
<text x="770.30" y="140.8" font-family="Liberation Sans" font-size="9" fill="#0a0a0a" text-anchor="middle">68</text>
<text x="792.80" y="140.8" font-family="Liberation Sans" font-size="9" fill="#0a0a0a" text-anchor="middle">69</text>
<text x="815.30" y="140.8" font-family="Liberation Sans" font-size="9" fill="#0a0a0a" text-anchor="middle">70</text>
<text x="837.80" y="140.8" font-family="Liberation Sans" font-size="9" fill="#0a0a0a" text-anchor="middle">71</text>
<text x="860.30" y="140.8" font-family="Liberation Sans" font-size="9" fill="#0a0a0a" text-anchor="middle">72</text>
<text x="882.80" y="140.8" font-family="Liberation Sans" font-size="9" fill="#0a0a0a" text-anchor="middle">73</text>
<text x="905.30" y="140.8" font-family="Liberation Sans" font-size="9" fill="#0a0a0a" text-anchor="middle">74</text>
<text x="927.80" y="140.8" font-family="Liberation Sans" font-size="9" fill="#0a0a0a" text-anchor="middle">75</text>
<text x="950.30" y="140.8" font-family="Liberation Sans" font-size="9" fill="#0a0a0a" text-anchor="middle">76</text>
<text x="972.80" y="140.8" font-family="Liberation Sans" font-size="9" fill="#0a0a0a" text-anchor="middle">77</text>
<text x="995.30" y="140.8" font-family="Liberation Sans" font-size="9" fill="#0a0a0a" text-anchor="middle">78</text>
<text x="1017.80" y="140.8" font-family="Liberation Sans" font-size="9" fill="#0a0a0a" text-anchor="middle">79</text>
<text x="1040.30" y="140.8" font-family="Liberation Sans" font-size="9" fill="#0a0a0a" text-anchor="middle">80</text>
<text x="1062.80" y="140.8" font-family="Liberation Sans" font-size="9" fill="#0a0a0a" text-anchor="middle">81</text>
<text x="1085.30" y="140.8" font-family="Liberation Sans" font-size="9" fill="#0a0a0a" text-anchor="middle">82</text>
<text x="1107.80" y="140.8" font-family="Liberation Sans" font-size="9" fill="#0a0a0a" text-anchor="middle">83</text>
<text x="1130.30" y="140.8" font-family="Liberation Sans" font-size="9" fill="#0a0a0a" text-anchor="middle">84</text>
<text x="1152.80" y="140.8" font-family="Liberation Sans" font-size="9" fill="#0a0a0a" text-anchor="middle">85</text>
<path d="M95.5 148v7M117.5 148v7M140.5 148v7M162.5 148v7M185.5 148v7M207.5 148v7M230.5 148v7M252.5 148v7M275.5 148v7M297.5 148v7M320.5 148v7M342.5 148v7M365.5 148v7M387.5 148v7M410.5 148v7M432.5 148v7M455.5 148v7M477.5 148v7M500.5 148v7M522.5 148v7M545.5 148v7M567.5 148v7M590.5 148v7M612.5 148v7M635.5 148v7M657.5 148v7M680.5 148v7M702.5 148v7M725.5 148v7M747.5 148v7M770.5 148v7M792.5 148v7M815.5 148v7M837.5 148v7M860.5 148v7M882.5 148v7M905.5 148v7M927.5 148v7M950.5 148v7M972.5 148v7M995.5 148v7M1017.5 148v7M1040.5 148v7M1062.5 148v7M1085.5 148v7M1107.5 148v7M1130.5 148v7M1152.5 148v7" stroke="#666" stroke-width="1"/>
<path d="M806.3 145 L818.1 145 L812.2 150.8Z" fill="#000"/>
</svg>
<svg x="72" y="155" width="23" height="577" viewBox="72 155 23 577" overflow="hidden">
<text transform="translate(80.8,754.70) rotate(-90)" x="0" y="0" font-family="Liberation Sans" font-size="9" fill="#0a0a0a" text-anchor="middle">-9</text>
<text transform="translate(80.8,731.00) rotate(-90)" x="0" y="0" font-family="Liberation Sans" font-size="9" fill="#0a0a0a" text-anchor="middle">-8</text>
<text transform="translate(80.8,709.70) rotate(-90)" x="0" y="0" font-family="Liberation Sans" font-size="9" fill="#0a0a0a" text-anchor="middle">-7</text>
<text transform="translate(80.8,687.20) rotate(-90)" x="0" y="0" font-family="Liberation Sans" font-size="9" fill="#0a0a0a" text-anchor="middle">-6</text>
<text transform="translate(80.8,664.70) rotate(-90)" x="0" y="0" font-family="Liberation Sans" font-size="9" fill="#0a0a0a" text-anchor="middle">-5</text>
<text transform="translate(80.8,642.20) rotate(-90)" x="0" y="0" font-family="Liberation Sans" font-size="9" fill="#0a0a0a" text-anchor="middle">-4</text>
<text transform="translate(80.8,619.70) rotate(-90)" x="0" y="0" font-family="Liberation Sans" font-size="9" fill="#0a0a0a" text-anchor="middle">-3</text>
<text transform="translate(80.8,597.20) rotate(-90)" x="0" y="0" font-family="Liberation Sans" font-size="9" fill="#0a0a0a" text-anchor="middle">-2</text>
<text transform="translate(80.8,574.70) rotate(-90)" x="0" y="0" font-family="Liberation Sans" font-size="9" fill="#0a0a0a" text-anchor="middle">-1</text>
<text transform="translate(80.8,552.20) rotate(-90)" x="0" y="0" font-family="Liberation Sans" font-size="9" fill="#0a0a0a" text-anchor="middle">0</text>
<text transform="translate(80.8,529.70) rotate(-90)" x="0" y="0" font-family="Liberation Sans" font-size="9" fill="#0a0a0a" text-anchor="middle">1</text>
<text transform="translate(80.8,507.20) rotate(-90)" x="0" y="0" font-family="Liberation Sans" font-size="9" fill="#0a0a0a" text-anchor="middle">2</text>
<text transform="translate(80.8,484.70) rotate(-90)" x="0" y="0" font-family="Liberation Sans" font-size="9" fill="#0a0a0a" text-anchor="middle">3</text>
<text transform="translate(80.8,462.20) rotate(-90)" x="0" y="0" font-family="Liberation Sans" font-size="9" fill="#0a0a0a" text-anchor="middle">4</text>
<text transform="translate(80.8,439.70) rotate(-90)" x="0" y="0" font-family="Liberation Sans" font-size="9" fill="#0a0a0a" text-anchor="middle">5</text>
<text transform="translate(80.8,417.20) rotate(-90)" x="0" y="0" font-family="Liberation Sans" font-size="9" fill="#0a0a0a" text-anchor="middle">6</text>
<text transform="translate(80.8,394.70) rotate(-90)" x="0" y="0" font-family="Liberation Sans" font-size="9" fill="#0a0a0a" text-anchor="middle">7</text>
<text transform="translate(80.8,372.20) rotate(-90)" x="0" y="0" font-family="Liberation Sans" font-size="9" fill="#0a0a0a" text-anchor="middle">8</text>
<text transform="translate(80.8,349.70) rotate(-90)" x="0" y="0" font-family="Liberation Sans" font-size="9" fill="#0a0a0a" text-anchor="middle">9</text>
<text transform="translate(80.8,327.20) rotate(-90)" x="0" y="0" font-family="Liberation Sans" font-size="9" fill="#0a0a0a" text-anchor="middle">10</text>
<text transform="translate(80.8,304.70) rotate(-90)" x="0" y="0" font-family="Liberation Sans" font-size="9" fill="#0a0a0a" text-anchor="middle">11</text>
<text transform="translate(80.8,282.20) rotate(-90)" x="0" y="0" font-family="Liberation Sans" font-size="9" fill="#0a0a0a" text-anchor="middle">12</text>
<text transform="translate(80.8,259.70) rotate(-90)" x="0" y="0" font-family="Liberation Sans" font-size="9" fill="#0a0a0a" text-anchor="middle">13</text>
<text transform="translate(80.8,237.20) rotate(-90)" x="0" y="0" font-family="Liberation Sans" font-size="9" fill="#0a0a0a" text-anchor="middle">14</text>
<text transform="translate(80.8,214.70) rotate(-90)" x="0" y="0" font-family="Liberation Sans" font-size="9" fill="#0a0a0a" text-anchor="middle">15</text>
<text transform="translate(80.8,192.20) rotate(-90)" x="0" y="0" font-family="Liberation Sans" font-size="9" fill="#0a0a0a" text-anchor="middle">16</text>
<text transform="translate(80.8,169.70) rotate(-90)" x="0" y="0" font-family="Liberation Sans" font-size="9" fill="#0a0a0a" text-anchor="middle">17</text>
<text transform="translate(80.8,147.20) rotate(-90)" x="0" y="0" font-family="Liberation Sans" font-size="9" fill="#0a0a0a" text-anchor="middle">18</text>
<path d="M88 709.5h7M88 687.5h7M88 664.5h7M88 642.5h7M88 619.5h7M88 597.5h7M88 574.5h7M88 552.5h7M88 529.5h7M88 507.5h7M88 484.5h7M88 462.5h7M88 439.5h7M88 417.5h7M88 394.5h7M88 372.5h7M88 349.5h7M88 327.5h7M88 304.5h7M88 282.5h7M88 259.5h7M88 237.5h7M88 214.5h7M88 192.5h7M88 169.5h7M88 147.5h7" stroke="#666" stroke-width="1"/>
<path d="M85 333.2 L91.2 339.8 L85 346.4Z" fill="#000"/>
</svg><defs><linearGradient id="dtb" x1="0" y1="0" x2="0" y2="1"><stop offset="0" stop-color="#ededed"/><stop offset="1" stop-color="#dcdcdc"/></linearGradient>
<linearGradient id="lbtn" x1="0" y1="0" x2="0" y2="1"><stop offset="0" stop-color="#e8e8e8"/><stop offset="1" stop-color="#f6f6f6"/></linearGradient></defs>
<rect x="1155" y="108" width="299" height="22.5" fill="url(#dtb)"/>
<circle cx="1163.8" cy="117.9" r="7" fill="#6e6e6e"/><path d="M1161 115.1 l5.6 5.6 M1166.6 115.1 l-5.6 5.6" stroke="#fff" stroke-width="1.8"/>
<circle cx="1182.1" cy="117.9" r="7" fill="#6e6e6e"/><path d="M1180.6 114.5h4.6v3.6 M1178.6 116.5h4.6v4.4h-4.6z" fill="none" stroke="#fff" stroke-width="1.1"/>
<text x="1322" y="122.6" font-family="Liberation Sans" font-size="12" fill="#222" text-anchor="middle">Layerliste</text>
<rect x="1155.75" y="131.25" width="58.5" height="24.5" fill="url(#lbtn)" stroke="#a9a9a9" stroke-width="1.5"/>
<rect x="1215.75" y="131.25" width="58.5" height="24.5" fill="url(#lbtn)" stroke="#a9a9a9" stroke-width="1.5"/>
<rect x="1275.75" y="131.25" width="58.5" height="24.5" fill="url(#lbtn)" stroke="#a9a9a9" stroke-width="1.5"/>
<rect x="1335.75" y="131.25" width="58.5" height="24.5" fill="url(#lbtn)" stroke="#a9a9a9" stroke-width="1.5"/>
<rect x="1395.75" y="131.25" width="58" height="24.5" fill="url(#lbtn)" stroke="#a9a9a9" stroke-width="1.5"/>
<path d="M1177.5 142.7 C1180 135.7 1190 135.7 1192.5 142.7 C1190 149.2 1180 149.2 1177.5 142.7Z" fill="#000"/><ellipse cx="1185" cy="143.4" rx="4.8" ry="3.1" fill="#fff"/><circle cx="1185" cy="142.6" r="2.4" fill="#000"/>
<path d="M1237.5 142.7 C1240 135.7 1250 135.7 1252.5 142.7 C1250 149.2 1240 149.2 1237.5 142.7Z" fill="#a8a8a8"/><ellipse cx="1245" cy="143.4" rx="4.8" ry="3.1" fill="#f0f0f0"/><circle cx="1245" cy="142.6" r="2.4" fill="#a8a8a8"/>
<path d="M1299 142.7h12 M1305 136.7v12" stroke="#e00000" stroke-width="3"/>
<path d="M1358.6 142.7h12.4" stroke="#e00000" stroke-width="3"/>
<path d="M1421.49 148.74 L1433.67 137.24 L1431.33 134.76 L1419.16 146.27 Z" fill="#e9b24a" stroke="#8a5a18" stroke-width="0.7"/><path d="M1418.00 149.70 L1421.49 148.74 L1419.16 146.27 Z" fill="#f0d8a8" stroke="#8a5a18" stroke-width="0.6"/><path d="M1431.63 139.16 L1433.67 137.24 L1431.33 134.76 L1429.30 136.69 Z" fill="#e02a20" stroke="#902010" stroke-width="0.5"/><circle cx="1418.44" cy="149.29" r="0.7" fill="#333"/>
<rect x="1155.5" y="156.5" width="298.5" height="641.5" fill="#fff" stroke="#c4c4c4" stroke-width="1"/>
<line x1="1155" y1="156" x2="1454" y2="156" stroke="#b0b0b0" stroke-width="2"/>
<rect x="1161.5" y="163.5" width="15.5" height="8" fill="#fff" stroke="#000" stroke-width="1"/>
<text x="1183" y="171.4" font-family="Liberation Sans" font-size="13" fill="#111">0</text>
<path d="M1415.5 166.8 C1418 159.8 1428 159.8 1430.5 166.8 C1428 173.3 1418 173.3 1415.5 166.8Z" fill="#000"/><ellipse cx="1423" cy="167.5" rx="4.8" ry="3.1" fill="#fff"/><circle cx="1423" cy="166.7" r="2.4" fill="#000"/>
<path d="M1441.8 166.5 V163.2 A3.2 3.2 0 0 1 1448.2 163.2 V166.5" fill="none" stroke="#b6b6b6" stroke-width="1.4"/><rect x="1440.2" y="166.5" width="9.6" height="7.2" fill="#b6b6b6"/>
<rect x="1161.5" y="183.5" width="15.5" height="8" fill="#f00" stroke="#000" stroke-width="1"/>
<text x="1183" y="191.2" font-family="Liberation Sans" font-size="13" fill="#111">Versatz</text>
<path d="M1398.01 192.49 L1409.15 182.25 L1406.85 179.75 L1395.71 189.98 Z" fill="#e9b24a" stroke="#8a5a18" stroke-width="0.7"/><path d="M1394.50 193.40 L1398.01 192.49 L1395.71 189.98 Z" fill="#f0d8a8" stroke="#8a5a18" stroke-width="0.6"/><path d="M1407.09 184.15 L1409.15 182.25 L1406.85 179.75 L1404.79 181.64 Z" fill="#e02a20" stroke="#902010" stroke-width="0.5"/><circle cx="1394.94" cy="192.99" r="0.7" fill="#333"/>
<path d="M1415.5 186.6 C1418 179.6 1428 179.6 1430.5 186.6 C1428 193.1 1418 193.1 1415.5 186.6Z" fill="#000"/><ellipse cx="1423" cy="187.3" rx="4.8" ry="3.1" fill="#fff"/><circle cx="1423" cy="186.5" r="2.4" fill="#000"/>
<path d="M1441.8 186.5 V183.2 A3.2 3.2 0 0 1 1448.2 183.2 V186.5" fill="none" stroke="#b6b6b6" stroke-width="1.4"/><rect x="1440.2" y="186.5" width="9.6" height="7.2" fill="#b6b6b6"/><rect x="1461.5" y="116" width="2" height="2" fill="#a8a8a8"/>
<rect x="1467.7" y="116" width="2" height="2" fill="#a8a8a8"/>
<rect x="1473.9" y="116" width="2" height="2" fill="#a8a8a8"/>
<rect x="1480.1" y="116" width="2" height="2" fill="#a8a8a8"/>
<rect x="1486.3" y="116" width="2" height="2" fill="#a8a8a8"/>
<rect x="1456" y="120" width="46" height="42.5" rx="6" fill="#b9b9b9"/>
<rect x="1456" y="417.3" width="46" height="42" rx="6" fill="#b9b9b9"/>
<line x1="1458" y1="262" x2="1499" y2="262" stroke="#888" stroke-width="1" stroke-dasharray="1 2"/>
<line x1="1458" y1="409.5" x2="1499" y2="409.5" stroke="#888" stroke-width="1" stroke-dasharray="1 2"/>
<rect x="1463.5" y="127.9" width="27" height="27" fill="#fff" stroke="#222" stroke-width="1"/><rect x="1463.25" y="127.4" width="27.5" height="4.5" fill="#000"/><rect x="1464.7" y="128.2" width="3" height="3" fill="#fff"/><path d="M1470 137 l4-2 v13 l-4 2z" fill="#888" stroke="#444" stroke-width="0.6"/><path d="M1473 136 l10-4 v13 l-10 4z" fill="#fff" stroke="#555" stroke-width="0.7"/><path d="M1475 144 l4-7 l1 6z" fill="none" stroke="#e03030" stroke-width="0.8"/>
<rect x="1463.5" y="174.8" width="27" height="27" fill="#fff" stroke="#222" stroke-width="1"/><rect x="1463.25" y="174.3" width="27.5" height="4.5" fill="#000"/><rect x="1464.7" y="175.1" width="3" height="3" fill="#fff"/><rect x="1469" y="182" width="12" height="9" fill="#f6ecc4" stroke="#777" stroke-width="0.8"/><circle cx="1482" cy="191" r="5" fill="#f6ecc4" stroke="#777" stroke-width="0.8"/>
<rect x="1463.5" y="220.5" width="27" height="27" fill="#fff" stroke="#222" stroke-width="1"/><rect x="1463.25" y="220" width="27.5" height="4.5" fill="#000"/><rect x="1464.7" y="220.8" width="3" height="3" fill="#fff"/><rect x="1468.5" y="230" width="17" height="12" rx="2" fill="#f6f6f6" stroke="#b8c8e0" stroke-width="0.9"/>
<rect x="1463.5" y="276.7" width="27" height="27" fill="#fff" stroke="#222" stroke-width="1"/><rect x="1463.25" y="276.2" width="27.5" height="4.5" fill="#000"/><rect x="1464.7" y="277" width="3" height="3" fill="#fff"/><rect x="1467" y="284" width="4" height="3" fill="#000"/><rect x="1473.5" y="284" width="14" height="3" fill="#fff" stroke="#333" stroke-width="0.6"/><rect x="1467" y="290" width="4" height="3" fill="#000"/><rect x="1473.5" y="290" width="14" height="3" fill="#fff" stroke="#333" stroke-width="0.6"/><rect x="1467" y="296" width="4" height="3" fill="#000"/><rect x="1473.5" y="296" width="14" height="3" fill="#fff" stroke="#333" stroke-width="0.6"/>
<rect x="1463.5" y="323" width="27" height="27" fill="#fff" stroke="#222" stroke-width="1"/><rect x="1463.25" y="322.5" width="27.5" height="4.5" fill="#000"/><rect x="1464.7" y="323.3" width="3" height="3" fill="#fff"/><path d="M1469 333 h17 l-6.5 7 v6 l-4 2 v-8z" fill="#d8d8d8" stroke="#555" stroke-width="0.8"/>
<rect x="1463.5" y="369.2" width="27" height="27" fill="#fff" stroke="#222" stroke-width="1"/><rect x="1463.25" y="368.7" width="27.5" height="4.5" fill="#000"/><rect x="1464.7" y="369.5" width="3" height="3" fill="#fff"/><path d="M1469 375 v13 l5-4 v-5z" fill="#eee" stroke="#333" stroke-width="0.8"/><rect x="1474" y="378" width="10" height="7" rx="1.5" fill="#c8c8c8" stroke="#666" stroke-width="0.6"/><line x1="1467" y1="381.5" x2="1488" y2="381.5" stroke="#f08080" stroke-width="0.8" stroke-dasharray="1.5 1"/>
<rect x="1463.5" y="424.5" width="27" height="27" fill="#fff" stroke="#222" stroke-width="1"/><rect x="1463.25" y="424" width="27.5" height="4.5" fill="#000"/><rect x="1464.7" y="424.8" width="3" height="3" fill="#fff"/><path d="M1467 434h10 M1467 437.5h11 M1467 441h11 M1467 444.5h11" stroke="#888" stroke-width="0.7"/><rect x="1464" y="447" width="26" height="4" fill="#fff" stroke="#333" stroke-width="0.6"/><path d="M1473 449h14" stroke="#444" stroke-width="0.8"/>
<rect x="1463.5" y="471.6" width="27" height="27" fill="#fff" stroke="#222" stroke-width="1"/><rect x="1463.25" y="471.1" width="27.5" height="4.5" fill="#000"/><rect x="1464.7" y="471.9" width="3" height="3" fill="#fff"/><rect x="1470" y="479" width="14" height="16" rx="1" fill="#c48a2a"/><rect x="1471.5" y="481" width="11" height="12.5" fill="#f8f8f8"/><rect x="1474" y="477.5" width="6" height="3" fill="#888"/><rect x="95" y="732" width="1044" height="16" fill="#f8f8f8"/>
<rect x="259.8" y="736.3" width="668" height="7.4" rx="3.7" fill="#8a8a8a"/>
<rect x="1096" y="732" width="58" height="16" fill="#e4e4e4"/>
<text x="1153.5" y="745.3" font-family="Liberation Sans" font-size="12.5" fill="#111" text-anchor="end">1 &lt; 10</text>
<rect x="1139" y="132" width="15" height="600" fill="#f8f8f8"/>
<rect x="1142.5" y="289" width="8" height="313" rx="4" fill="#8a8a8a"/>
<line x1="72" y1="748.5" x2="1154" y2="748.5" stroke="#c8c8c8" stroke-width="1.5"/>
<rect x="72.5" y="749.5" width="1066.5" height="21" fill="#fff"/>
<rect x="1139" y="749.5" width="15" height="21" fill="#f8f8f8"/>
<rect x="1142.5" y="749.2" width="8" height="17.5" rx="4" fill="#8a8a8a"/>
<line x1="72" y1="770.7" x2="1154" y2="770.7" stroke="#c4c4c4" stroke-width="1"/>
<text x="77" y="762.4" font-family="Liberation Sans" font-size="13.6" fill="#1a1ad0"><tspan font-style="italic">Kommando:</tspan> offsetthrough</text>
<text x="73" y="789.6" font-family="Liberation Sans" font-size="13.2" fill="#111">Punkt angeben:</text>
<rect x="171" y="775.5" width="954.5" height="18.5" fill="#fff"/>
<rect x="1127.5" y="772" width="25" height="25.5" fill="#f0f0f0" stroke="#a8a8a8" stroke-width="1"/>
<rect x="1132.5" y="780.5" width="15" height="10" fill="none" stroke="#222" stroke-width="1"/><rect x="1132.5" y="780" width="15" height="2.5" fill="#000"/>
<rect x="0" y="797.5" width="1500" height="46.5" fill="#dcdcdc"/>
<line x1="0" y1="797.5" x2="1500" y2="797.5" stroke="#c8c8c8" stroke-width="1"/>
<text x="2" y="815.5" font-family="Liberation Sans" font-size="10" fill="#1e1e1e">69.8747,9.4172</text>
<text x="2" y="836" font-family="Liberation Sans" font-size="10" fill="#1e1e1e">@69.8747,9.4172</text>
<line x1="253.7" y1="802" x2="253.7" y2="842" stroke="#a0a0a0" stroke-width="1"/>
<text x="256" y="815.5" font-family="Liberation Sans" font-size="10" fill="#1e1e1e">70.5064&lt;8°</text>
<text x="256" y="836" font-family="Liberation Sans" font-size="10" fill="#1e1e1e">@70.5064&lt;8°</text>
<circle cx="509.4" cy="822" r="2.8" fill="#c4c4c4"/>
<text x="631.4" y="825.6" font-family="Liberation Sans" font-size="10" fill="#1e1e1e">Punkt angeben</text>
<path d="M726 805.8 C720 805.8 717.2 810 717.2 815 V826 C717.2 832 721 835.5 726 835.5 C731 835.5 734.8 832 734.8 826 V815 C734.8 810 732 805.8 726 805.8Z" fill="#fff" stroke="#222" stroke-width="0.9"/>
<path d="M717.5 819.3 Q726 817.5 734.5 819.3 M726 806 V818" fill="none" stroke="#222" stroke-width="0.8"/>
<rect x="724.6" y="808" width="2.8" height="6" rx="1.4" fill="#fff" stroke="#222" stroke-width="0.7"/>
<text x="754.4" y="825.3" font-family="Liberation Sans" font-size="10" fill="#1e1e1e">Zurück</text>
<circle cx="943.3" cy="822" r="2.6" fill="#c4c4c4"/>
<text x="949.3" y="825.3" font-family="Liberation Sans" font-size="10" fill="#1e1e1e">Keine Objekte selektiert.</text>
<circle cx="1272.5" cy="822" r="2.8" fill="#c4c4c4"/></svg>
</body></html>
